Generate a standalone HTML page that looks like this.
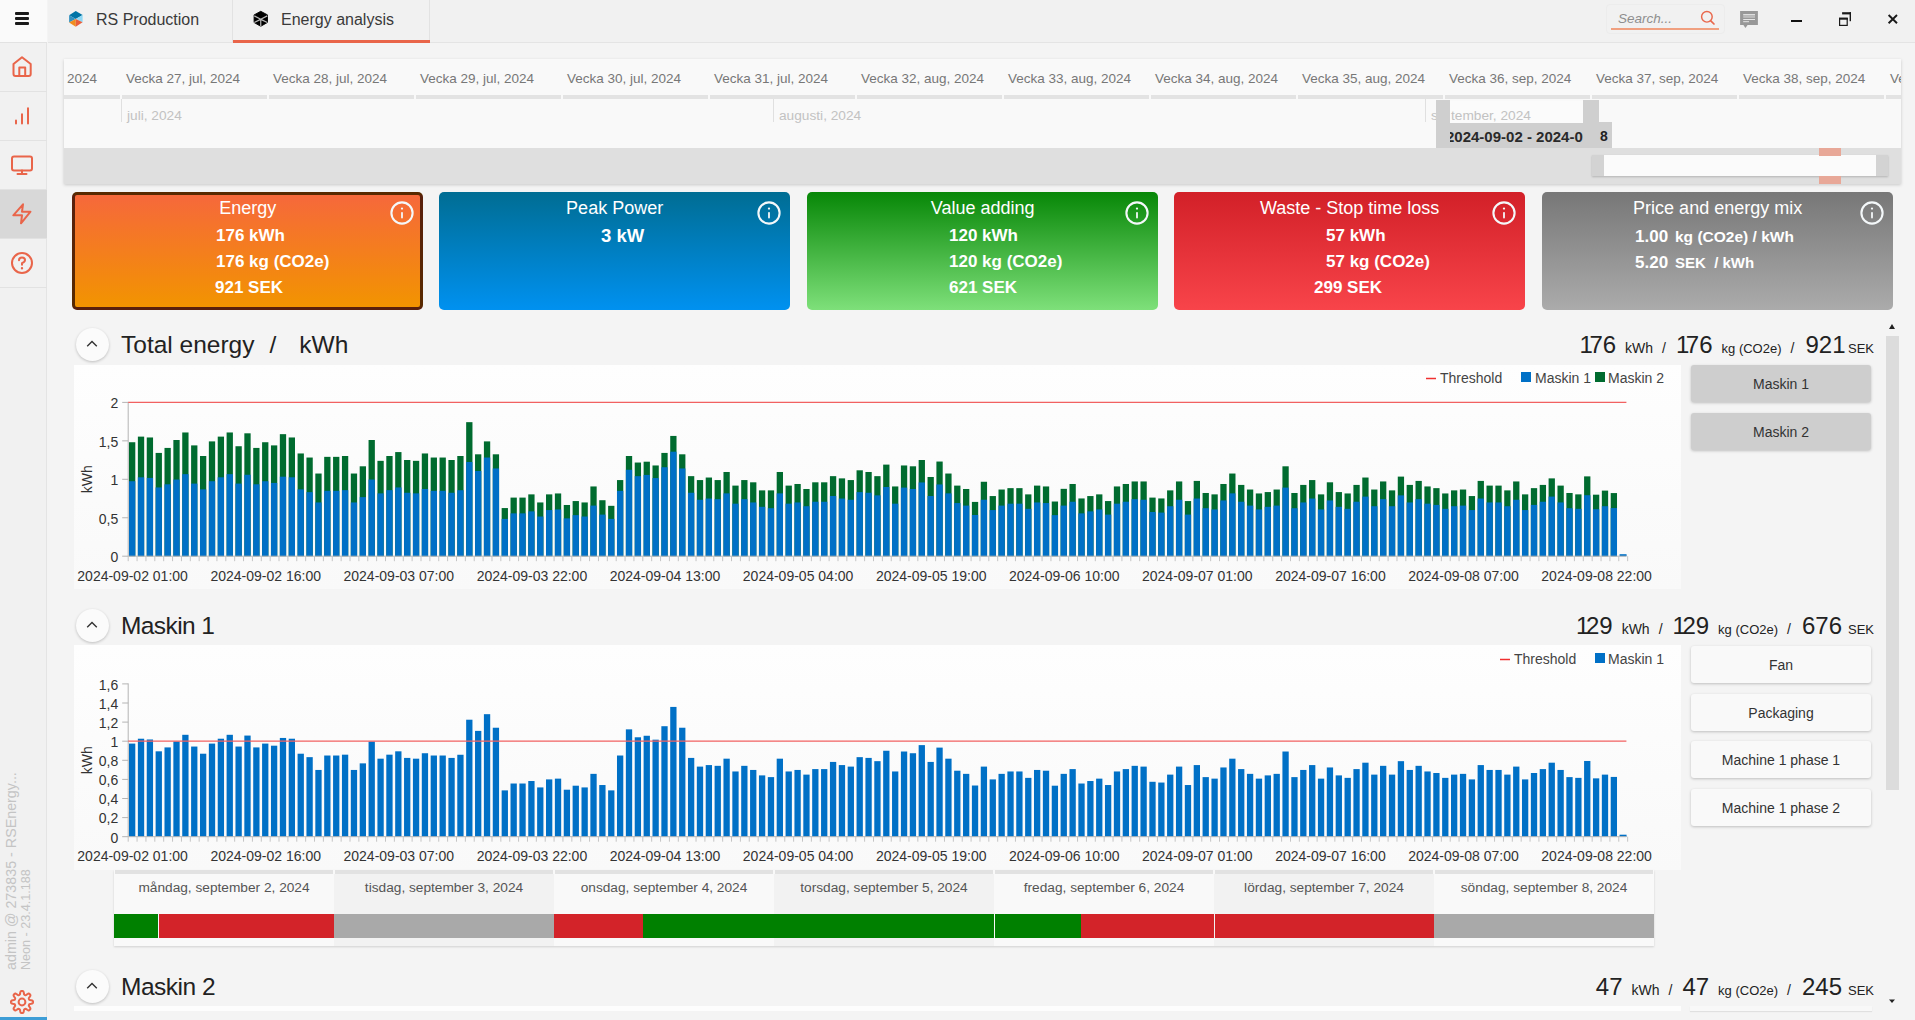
<!DOCTYPE html><html><head><meta charset="utf-8"><style>
*{box-sizing:border-box;margin:0;padding:0}
html,body{width:1915px;height:1020px;overflow:hidden;background:#f4f4f4;font-family:"Liberation Sans", sans-serif;}
.a{position:absolute}
.t{position:absolute;white-space:nowrap;line-height:1}
</style></head><body><div class="a" style="left:0;top:0;width:47px;height:1020px;background:#f1f1f1;border-right:1px solid #e4e4e4"></div><div class="a" style="left:0;top:0;width:47px;height:42px;background:#fafafa"></div><div class="a" style="left:15px;top:12px;width:14px;height:3px;background:#1a1a1a;border-radius:1px"></div><div class="a" style="left:15px;top:17px;width:14px;height:3px;background:#1a1a1a;border-radius:1px"></div><div class="a" style="left:15px;top:22px;width:14px;height:3px;background:#1a1a1a;border-radius:1px"></div><div class="a" style="left:0;top:42px;width:47px;height:1px;background:#e2e2e2"></div><div class="a" style="left:0;top:91px;width:47px;height:1px;background:#e2e2e2"></div><div class="a" style="left:0;top:140px;width:47px;height:1px;background:#e2e2e2"></div><div class="a" style="left:0;top:189px;width:47px;height:1px;background:#e2e2e2"></div><div class="a" style="left:0;top:238px;width:47px;height:1px;background:#e2e2e2"></div><div class="a" style="left:0;top:287px;width:47px;height:1px;background:#e2e2e2"></div><div class="a" style="left:0;top:190px;width:47px;height:48px;background:#d8d8d8"></div><svg class="a" style="left:10px;top:55px" width="24" height="24" viewBox="0 0 24 24"><path d="M3.5 9 L12 2.3 L20.7 9 V19 Q20.7 21 18.7 21 H5.5 Q3.5 21 3.5 19 Z" fill="none" stroke="#e9654a" stroke-width="2" stroke-linecap="round" stroke-linejoin="round"/><path d="M9.3 21 V12.5 H15.2 V21" fill="none" stroke="#e9654a" stroke-width="2" stroke-linecap="round" stroke-linejoin="round"/></svg><svg class="a" style="left:10px;top:103px" width="24" height="24" viewBox="0 0 24 24"><path d="M6 20.6 V17.5 M12 20.6 V11.2 M18 20.6 V5.3" fill="none" stroke="#e9654a" stroke-width="2" stroke-linecap="round" stroke-linejoin="round" stroke-width="2.2"/></svg><svg class="a" style="left:10px;top:153px" width="24" height="24" viewBox="0 0 24 24"><rect x="2" y="3.5" width="20" height="14" rx="2" fill="none" stroke="#e9654a" stroke-width="2" stroke-linecap="round" stroke-linejoin="round"/><path d="M12 17.5 V21 M7.5 21 H16.5" fill="none" stroke="#e9654a" stroke-width="2" stroke-linecap="round" stroke-linejoin="round"/></svg><svg class="a" style="left:10px;top:201px" width="24" height="24" viewBox="0 0 24 24"><path d="M13 3.3 L3.3 14.3 H12 L11 22.3 L20.5 10.7 H12 Z" fill="none" stroke="#e9654a" stroke-width="2" stroke-linecap="round" stroke-linejoin="round"/></svg><svg class="a" style="left:10px;top:251px" width="24" height="24" viewBox="0 0 24 24"><circle cx="12" cy="12" r="10" fill="none" stroke="#e9654a" stroke-width="2" stroke-linecap="round" stroke-linejoin="round"/><path d="M9 9.2 Q9 6.5 12 6.5 Q15 6.5 15 9 Q15 10.8 12 12.2 V13.8" fill="none" stroke="#e9654a" stroke-width="2" stroke-linecap="round" stroke-linejoin="round"/><circle cx="12" cy="17.3" r="0.6" fill="#e9654a" stroke="#e9654a" stroke-width="1.2"/></svg><div class="t" style="left:4px;top:970px;transform-origin:0 0;transform:rotate(-90deg);font-size:14.3px;color:#c4c4c4">admin @ 273835 - RSEnergy...</div><div class="t" style="left:20px;top:970px;transform-origin:0 0;transform:rotate(-90deg);font-size:12.6px;color:#c4c4c4">Neon - 23.4.1.188</div><svg class="a" style="left:10px;top:990px" width="24" height="24" viewBox="0 0 24 24"><path d="M12.00 0.95 L12.43 0.98 L12.86 1.08 L13.26 1.32 L13.60 1.89 L13.81 2.88 L13.95 3.86 L14.13 4.45 L14.36 4.73 L14.62 4.90 L14.89 5.02 L15.17 5.13 L15.47 5.19 L15.84 5.15 L16.37 4.87 L17.17 4.27 L18.02 3.72 L18.66 3.56 L19.12 3.67 L19.49 3.90 L19.81 4.19 L20.10 4.51 L20.33 4.88 L20.44 5.34 L20.28 5.98 L19.73 6.83 L19.13 7.63 L18.85 8.16 L18.81 8.53 L18.87 8.83 L18.98 9.11 L19.10 9.38 L19.27 9.64 L19.55 9.87 L20.14 10.05 L21.12 10.19 L22.11 10.40 L22.68 10.74 L22.92 11.14 L23.02 11.57 L23.05 12.00 L23.02 12.43 L22.92 12.86 L22.68 13.26 L22.11 13.60 L21.12 13.81 L20.14 13.95 L19.55 14.13 L19.27 14.36 L19.10 14.62 L18.98 14.89 L18.87 15.17 L18.81 15.47 L18.85 15.84 L19.13 16.37 L19.73 17.17 L20.28 18.02 L20.44 18.66 L20.33 19.12 L20.10 19.49 L19.81 19.81 L19.49 20.10 L19.12 20.33 L18.66 20.44 L18.02 20.28 L17.17 19.73 L16.37 19.13 L15.84 18.85 L15.47 18.81 L15.17 18.87 L14.89 18.98 L14.62 19.10 L14.36 19.27 L14.13 19.55 L13.95 20.14 L13.81 21.12 L13.60 22.11 L13.26 22.68 L12.86 22.92 L12.43 23.02 L12.00 23.05 L11.57 23.02 L11.14 22.92 L10.74 22.68 L10.40 22.11 L10.19 21.12 L10.05 20.14 L9.87 19.55 L9.64 19.27 L9.38 19.10 L9.11 18.98 L8.83 18.87 L8.53 18.81 L8.16 18.85 L7.63 19.13 L6.83 19.73 L5.98 20.28 L5.34 20.44 L4.88 20.33 L4.51 20.10 L4.19 19.81 L3.90 19.49 L3.67 19.12 L3.56 18.66 L3.72 18.02 L4.27 17.17 L4.87 16.37 L5.15 15.84 L5.19 15.47 L5.13 15.17 L5.02 14.89 L4.90 14.62 L4.73 14.36 L4.45 14.13 L3.86 13.95 L2.88 13.81 L1.89 13.60 L1.32 13.26 L1.08 12.86 L0.98 12.43 L0.95 12.00 L0.98 11.57 L1.08 11.14 L1.32 10.74 L1.89 10.40 L2.88 10.19 L3.86 10.05 L4.45 9.87 L4.73 9.64 L4.90 9.38 L5.02 9.11 L5.13 8.83 L5.19 8.53 L5.15 8.16 L4.87 7.63 L4.27 6.83 L3.72 5.98 L3.56 5.34 L3.67 4.88 L3.90 4.51 L4.19 4.19 L4.51 3.90 L4.88 3.67 L5.34 3.56 L5.98 3.72 L6.83 4.27 L7.63 4.87 L8.16 5.15 L8.53 5.19 L8.83 5.13 L9.11 5.02 L9.38 4.90 L9.64 4.73 L9.87 4.45 L10.05 3.86 L10.19 2.88 L10.40 1.89 L10.74 1.32 L11.14 1.08 L11.57 0.98 L12.00 0.95 Z" fill="none" stroke="#e9654a" stroke-width="2" stroke-linecap="round" stroke-linejoin="round" stroke-width="1.8"/><circle cx="12" cy="12" r="3.4" fill="none" stroke="#e9654a" stroke-width="2" stroke-linecap="round" stroke-linejoin="round" stroke-width="1.8"/></svg><div class="a" style="left:0;top:1017px;width:47px;height:3px;background:#3d9dd6"></div><div class="a" style="left:48px;top:0;width:1867px;height:43px;background:#f1f1f1;border-bottom:1px solid #e4e4e4"></div><svg class="a" style="left:63px;top:6px" width="26" height="26" viewBox="0 0 26 26"><polygon points="12.75,5.1 19.6,8.9 12.75,13 6.1,9.2" fill="#0074a6"/><polygon points="6.1,9.2 12.75,13 6.1,16.6" fill="#3190c0"/><polygon points="19.6,8.9 19.6,16.3 12.75,13" fill="#8fd8f4"/><polygon points="6.1,16.6 12.75,13 12.75,20.7" fill="#f08d1e"/><polygon points="12.75,13 19.6,16.3 12.75,20.7" fill="#e95e3b"/></svg><div class="t" style="left:96px;top:12px;font-size:16px;color:#3a3a3a">RS Production</div><div class="a" style="left:232px;top:0;width:1px;height:42px;background:#e2e2e2"></div><div class="a" style="left:429px;top:0;width:1px;height:42px;background:#e2e2e2"></div><svg class="a" style="left:248px;top:6px" width="26" height="26" viewBox="0 0 26 26"><polygon points="12.75,5.3 19.5,8.9 19.5,16.4 12.75,20.3 6.1,16.5 6.1,8.9" fill="#000" stroke="#000" stroke-width="0.9" stroke-linejoin="round"/><path d="M12.75 13.2 L6.3 9.9 M12.75 13.2 L19.3 9.9 M12.75 13.2 V20.5 M12.1 13.6 L6.3 16.5 M13.4 13.6 L19.3 16.5" stroke="#b9b9b9" stroke-width="1.2" fill="none"/></svg><div class="t" style="left:281px;top:12px;font-size:16px;color:#3a3a3a">Energy analysis</div><div class="a" style="left:233px;top:40px;width:197px;height:3px;background:#e9654a"></div><div class="a" style="left:1606px;top:4px;width:119px;height:30px;border:1px solid #ececec;border-radius:4px"></div><div class="t" style="left:1618px;top:12px;font-size:13.5px;font-style:italic;color:#8e8e8e">Search...</div><div class="a" style="left:1611px;top:28px;width:108px;height:2px;background:#f0a080"></div><svg class="a" style="left:1699px;top:9px" width="18" height="18" viewBox="0 0 18 18"><circle cx="7.9" cy="7.8" r="5.3" fill="none" stroke="#e9684c" stroke-width="1.45"/><path d="M11.8 11.8 L15 15" stroke="#e9684c" stroke-width="1.7" stroke-linecap="round"/></svg><svg class="a" style="left:1739px;top:10px" width="20" height="20" viewBox="0 0 20 20"><path d="M1.1 1 H18.9 V15 H8.6 L6.4 18 L4.4 15 H1.1 Z" fill="#989898"/><rect x="4.2" y="5.2" width="11.8" height="2.7" fill="#bcbcbc"/><path d="M4.2 4.6 H16 M4.2 9.5 H16 M4.2 11.7 H10" stroke="#eeeeee" stroke-width="0.9"/></svg><div class="a" style="left:1791px;top:20px;width:11px;height:2px;background:#111"></div><svg class="a" style="left:1837px;top:10px" width="16" height="17" viewBox="0 0 16 17"><rect x="2.6" y="8.4" width="7.6" height="7" fill="none" stroke="#1a1a1a" stroke-width="1.2"/><rect x="2" y="7.7" width="8.8" height="2" fill="#1a1a1a"/><rect x="5.1" y="2.2" width="8.9" height="2.2" fill="#1a1a1a"/><rect x="12.6" y="2.2" width="1.4" height="9" fill="#1a1a1a"/></svg><svg class="a" style="left:1886px;top:12px" width="13" height="13" viewBox="0 0 13 13"><path d="M2.6 3 L11 11.2 M11 3 L2.6 11.2" stroke="#1a1a1a" stroke-width="1.9"/></svg><div class="a" style="left:64px;top:59px;width:1837px;height:125px;background:#f9f9f9;box-shadow:0 1px 3px rgba(0,0,0,0.18);overflow:hidden"><div class="a" style="left:0;top:89px;width:1837px;height:36px;background:#dfdfdf"></div><div class="a" style="left:0;top:36px;width:56px;height:4px;background:#e3e3e3"></div><div class="t" style="left:3px;top:13px;font-size:13.5px;color:#777">2024</div><div class="a" style="left:58px;top:36px;width:145px;height:4px;background:#e3e3e3"></div><div class="t" style="left:62px;top:13px;font-size:13.5px;color:#777">Vecka 27, jul, 2024</div><div class="a" style="left:205px;top:36px;width:145px;height:4px;background:#e3e3e3"></div><div class="t" style="left:209px;top:13px;font-size:13.5px;color:#777">Vecka 28, jul, 2024</div><div class="a" style="left:352px;top:36px;width:145px;height:4px;background:#e3e3e3"></div><div class="t" style="left:356px;top:13px;font-size:13.5px;color:#777">Vecka 29, jul, 2024</div><div class="a" style="left:499px;top:36px;width:145px;height:4px;background:#e3e3e3"></div><div class="t" style="left:503px;top:13px;font-size:13.5px;color:#777">Vecka 30, jul, 2024</div><div class="a" style="left:646px;top:36px;width:145px;height:4px;background:#e3e3e3"></div><div class="t" style="left:650px;top:13px;font-size:13.5px;color:#777">Vecka 31, jul, 2024</div><div class="a" style="left:793px;top:36px;width:145px;height:4px;background:#e3e3e3"></div><div class="t" style="left:797px;top:13px;font-size:13.5px;color:#777">Vecka 32, aug, 2024</div><div class="a" style="left:940px;top:36px;width:145px;height:4px;background:#e3e3e3"></div><div class="t" style="left:944px;top:13px;font-size:13.5px;color:#777">Vecka 33, aug, 2024</div><div class="a" style="left:1087px;top:36px;width:145px;height:4px;background:#e3e3e3"></div><div class="t" style="left:1091px;top:13px;font-size:13.5px;color:#777">Vecka 34, aug, 2024</div><div class="a" style="left:1234px;top:36px;width:145px;height:4px;background:#e3e3e3"></div><div class="t" style="left:1238px;top:13px;font-size:13.5px;color:#777">Vecka 35, aug, 2024</div><div class="a" style="left:1381px;top:36px;width:145px;height:4px;background:#e3e3e3"></div><div class="t" style="left:1385px;top:13px;font-size:13.5px;color:#777">Vecka 36, sep, 2024</div><div class="a" style="left:1528px;top:36px;width:145px;height:4px;background:#e3e3e3"></div><div class="t" style="left:1532px;top:13px;font-size:13.5px;color:#777">Vecka 37, sep, 2024</div><div class="a" style="left:1675px;top:36px;width:145px;height:4px;background:#e3e3e3"></div><div class="t" style="left:1679px;top:13px;font-size:13.5px;color:#777">Vecka 38, sep, 2024</div><div class="a" style="left:1822px;top:36px;width:145px;height:4px;background:#e3e3e3"></div><div class="t" style="left:1826px;top:13px;font-size:13.5px;color:#777">Vecka 39, sep, 2024</div><div class="a" style="left:57px;top:40px;width:1px;height:23px;background:#e0e0e0"></div><div class="t" style="left:63px;top:50px;font-size:13.7px;color:#c2c2c2">juli, 2024</div><div class="a" style="left:709px;top:40px;width:1px;height:23px;background:#e0e0e0"></div><div class="t" style="left:715px;top:50px;font-size:13.7px;color:#c2c2c2">augusti, 2024</div><div class="a" style="left:1361px;top:40px;width:1px;height:23px;background:#e0e0e0"></div><div class="t" style="left:1367px;top:50px;font-size:13.7px;color:#c2c2c2">september, 2024</div><div class="a" style="left:1372px;top:41px;width:14px;height:48px;background:#cfcfcf"></div><div class="a" style="left:1519px;top:41px;width:16px;height:48px;background:#cfcfcf"></div><div class="a" style="left:1372px;top:63px;width:176px;height:26px;background:#cfcfcf"></div><div class="a" style="left:1386px;top:42px;width:133px;height:22px;background:#fbfbfb;overflow:hidden"><div class="t" style="left:1px;top:8px;font-size:13.7px;color:#c2c2c2">tember, 2024</div></div><div class="a" style="left:1386px;top:63px;width:133px;height:26px;overflow:hidden"><div class="t" style="left:-4px;top:7px;font-size:15px;font-weight:bold;color:#2a2a2a">2024-09-02 - 2024-09-08</div></div><div class="t" style="left:1536px;top:70px;font-size:14px;font-weight:bold;color:#222">8</div><div class="a" style="left:1528px;top:96px;width:296px;height:21px;background:#d3d3d3;box-shadow:0 1px 2px rgba(0,0,0,0.2)"></div><div class="a" style="left:1540px;top:96px;width:272px;height:21px;background:#fbfbfb"></div><div class="a" style="left:1755px;top:89px;width:22px;height:8px;background:#e8a898"></div><div class="a" style="left:1755px;top:117px;width:22px;height:8px;background:#e8a898"></div></div><div class="a" style="left:72px;top:192px;width:351.3px;height:118px;background:linear-gradient(#f6683b,#f29400);border-radius:5px;border:3px solid rgba(45,12,0,0.78);"></div><div class="t" style="left:72px;top:199px;width:351.3px;text-align:center;font-size:18px;color:#fff">Energy</div><svg class="a" style="left:389.3px;top:200px" width="26" height="26" viewBox="0 0 26 26"><circle cx="13" cy="13" r="10.6" fill="none" stroke="#f4f8fa" stroke-width="2.1"/><circle cx="13" cy="8.6" r="1.15" fill="#f4f8fa"/><rect x="12.1" y="11.9" width="1.8" height="6.6" rx="0.9" fill="#f4f8fa"/></svg><div class="a" style="left:439px;top:192px;width:351.3px;height:118px;background:linear-gradient(#006d93,#0091f0);border-radius:5px;"></div><div class="t" style="left:439px;top:199px;width:351.3px;text-align:center;font-size:18px;color:#fff">Peak Power</div><svg class="a" style="left:756.3px;top:200px" width="26" height="26" viewBox="0 0 26 26"><circle cx="13" cy="13" r="10.6" fill="none" stroke="#f4f8fa" stroke-width="2.1"/><circle cx="13" cy="8.6" r="1.15" fill="#f4f8fa"/><rect x="12.1" y="11.9" width="1.8" height="6.6" rx="0.9" fill="#f4f8fa"/></svg><div class="a" style="left:807px;top:192px;width:351.3px;height:118px;background:linear-gradient(#078707,#7ee07a);border-radius:5px;"></div><div class="t" style="left:807px;top:199px;width:351.3px;text-align:center;font-size:18px;color:#fff">Value adding</div><svg class="a" style="left:1124.3px;top:200px" width="26" height="26" viewBox="0 0 26 26"><circle cx="13" cy="13" r="10.6" fill="none" stroke="#f4f8fa" stroke-width="2.1"/><circle cx="13" cy="8.6" r="1.15" fill="#f4f8fa"/><rect x="12.1" y="11.9" width="1.8" height="6.6" rx="0.9" fill="#f4f8fa"/></svg><div class="a" style="left:1174px;top:192px;width:351.3px;height:118px;background:linear-gradient(#d22028,#f8444a);border-radius:5px;"></div><div class="t" style="left:1174px;top:199px;width:351.3px;text-align:center;font-size:18px;color:#fff">Waste - Stop time loss</div><svg class="a" style="left:1491.3px;top:200px" width="26" height="26" viewBox="0 0 26 26"><circle cx="13" cy="13" r="10.6" fill="none" stroke="#f4f8fa" stroke-width="2.1"/><circle cx="13" cy="8.6" r="1.15" fill="#f4f8fa"/><rect x="12.1" y="11.9" width="1.8" height="6.6" rx="0.9" fill="#f4f8fa"/></svg><div class="a" style="left:1542px;top:192px;width:351.3px;height:118px;background:linear-gradient(#777777,#ababab);border-radius:5px;"></div><div class="t" style="left:1542px;top:199px;width:351.3px;text-align:center;font-size:18px;color:#fff">Price and energy mix</div><svg class="a" style="left:1859.3px;top:200px" width="26" height="26" viewBox="0 0 26 26"><circle cx="13" cy="13" r="10.6" fill="none" stroke="#f4f8fa" stroke-width="2.1"/><circle cx="13" cy="8.6" r="1.15" fill="#f4f8fa"/><rect x="12.1" y="11.9" width="1.8" height="6.6" rx="0.9" fill="#f4f8fa"/></svg><div class="t" style="left:216px;top:227px;font-size:17px;font-weight:bold;color:#fff">176 kWh</div><div class="t" style="left:216px;top:253px;font-size:17px;font-weight:bold;color:#fff">176 kg (CO2e)</div><div class="t" style="left:215px;top:279px;font-size:17px;font-weight:bold;color:#fff">921 SEK</div><div class="t" style="left:601px;top:226.5px;font-size:18.5px;font-weight:bold;color:#fff">3 kW</div><div class="t" style="left:949px;top:227px;font-size:17px;font-weight:bold;color:#fff">120 kWh</div><div class="t" style="left:949px;top:253px;font-size:17px;font-weight:bold;color:#fff">120 kg (CO2e)</div><div class="t" style="left:949px;top:279px;font-size:17px;font-weight:bold;color:#fff">621 SEK</div><div class="t" style="left:1326px;top:227px;font-size:17px;font-weight:bold;color:#fff">57 kWh</div><div class="t" style="left:1326px;top:253px;font-size:17px;font-weight:bold;color:#fff">57 kg (CO2e)</div><div class="t" style="left:1314px;top:279px;font-size:17px;font-weight:bold;color:#fff">299 SEK</div><div class="t" style="left:1635px;top:228px;font-size:17px;font-weight:bold;color:#fff">1.00</div><div class="t" style="left:1675px;top:229px;font-size:15.5px;font-weight:bold;color:#fff">kg (CO2e) / kWh</div><div class="t" style="left:1635px;top:254px;font-size:17px;font-weight:bold;color:#fff">5.20</div><div class="t" style="left:1675px;top:255px;font-size:15px;font-weight:bold;color:#fff">SEK&nbsp; / kWh</div><div class="a" style="left:76px;top:328px;width:33px;height:33px;border-radius:50%;background:#fbfbfb;box-shadow:0 1px 3px rgba(0,0,0,0.22)"></div><svg class="a" style="left:86px;top:340px" width="12" height="8" viewBox="0 0 12 8"><path d="M1.2 6.3 L6 1.6 L10.8 6.3" fill="none" stroke="#333" stroke-width="1.4"/></svg><div class="t" style="left:121px;top:333.4px;font-size:24.5px;color:#222">Total energy<span style="display:inline-block;width:15px"></span>/<span style="display:inline-block;width:23px"></span>kWh</div><div class="t" style="right:41px;top:332.7px;display:flex;align-items:baseline;color:#222"><span style="font-size:24px"><span style="letter-spacing:-3.5px">1</span>76</span><span style="display:inline-block;width:9px"></span><span style="font-size:14px">kWh</span><span style="display:inline-block;width:9px"></span><span style="font-size:14px">/</span><span style="display:inline-block;width:10px"></span><span style="font-size:24px"><span style="letter-spacing:-3.5px">1</span>76</span><span style="display:inline-block;width:9px"></span><span style="font-size:13px">kg (CO2e)</span><span style="display:inline-block;width:9px"></span><span style="font-size:14px">/</span><span style="display:inline-block;width:11px"></span><span style="font-size:24px">92<span style="letter-spacing:-3.5px">1</span></span><span style="display:inline-block;width:6px"></span><span style="font-size:13px">SEK</span></div><div class="a" style="left:76px;top:609px;width:33px;height:33px;border-radius:50%;background:#fbfbfb;box-shadow:0 1px 3px rgba(0,0,0,0.22)"></div><svg class="a" style="left:86px;top:621px" width="12" height="8" viewBox="0 0 12 8"><path d="M1.2 6.3 L6 1.6 L10.8 6.3" fill="none" stroke="#333" stroke-width="1.4"/></svg><div class="t" style="left:121px;top:614.4px;font-size:24.5px;color:#222"><span style="letter-spacing:-0.6px">Maskin 1</span></div><div class="t" style="right:41px;top:613.7px;display:flex;align-items:baseline;color:#222"><span style="font-size:24px"><span style="letter-spacing:-3.5px">1</span>29</span><span style="display:inline-block;width:9px"></span><span style="font-size:14px">kWh</span><span style="display:inline-block;width:9px"></span><span style="font-size:14px">/</span><span style="display:inline-block;width:10px"></span><span style="font-size:24px"><span style="letter-spacing:-3.5px">1</span>29</span><span style="display:inline-block;width:9px"></span><span style="font-size:13px">kg (CO2e)</span><span style="display:inline-block;width:9px"></span><span style="font-size:14px">/</span><span style="display:inline-block;width:11px"></span><span style="font-size:24px">676</span><span style="display:inline-block;width:6px"></span><span style="font-size:13px">SEK</span></div><div class="a" style="left:76px;top:970px;width:33px;height:33px;border-radius:50%;background:#fbfbfb;box-shadow:0 1px 3px rgba(0,0,0,0.22)"></div><svg class="a" style="left:86px;top:982px" width="12" height="8" viewBox="0 0 12 8"><path d="M1.2 6.3 L6 1.6 L10.8 6.3" fill="none" stroke="#333" stroke-width="1.4"/></svg><div class="t" style="left:121px;top:975.4px;font-size:24.5px;color:#222"><span style="letter-spacing:-0.5px">Maskin 2</span></div><div class="t" style="right:41px;top:974.7px;display:flex;align-items:baseline;color:#222"><span style="font-size:24px">47</span><span style="display:inline-block;width:9px"></span><span style="font-size:14px">kWh</span><span style="display:inline-block;width:9px"></span><span style="font-size:14px">/</span><span style="display:inline-block;width:10px"></span><span style="font-size:24px">47</span><span style="display:inline-block;width:9px"></span><span style="font-size:13px">kg (CO2e)</span><span style="display:inline-block;width:9px"></span><span style="font-size:14px">/</span><span style="display:inline-block;width:11px"></span><span style="font-size:24px">245</span><span style="display:inline-block;width:6px"></span><span style="font-size:13px">SEK</span></div><div class="a" style="left:74px;top:365px;width:1607px;height:224px;background:linear-gradient(#fefefe,#f9f9f9)"></div><div class="a" style="left:74px;top:645px;width:1607px;height:225px;background:linear-gradient(#fefefe,#f9f9f9)"></div><div class="a" style="left:74px;top:1006px;width:1607px;height:5px;background:#fdfdfd"></div><div class="a" style="left:1690px;top:1006px;width:182px;height:5px;background:#f8f8f8;box-shadow:0 1px 1px rgba(0,0,0,0.08)"></div><div class="a" style="left:1691px;top:365px;width:180px;height:37px;background:#cecece;border-radius:3px;box-shadow:0 1px 3px rgba(0,0,0,0.22)"></div><div class="t" style="left:1691px;top:377px;width:180px;text-align:center;font-size:14px;color:#333">Maskin 1</div><div class="a" style="left:1691px;top:413px;width:180px;height:37px;background:#cecece;border-radius:3px;box-shadow:0 1px 3px rgba(0,0,0,0.22)"></div><div class="t" style="left:1691px;top:425px;width:180px;text-align:center;font-size:14px;color:#333">Maskin 2</div><div class="a" style="left:1691px;top:646px;width:180px;height:37px;background:#f9f9f9;border-radius:3px;box-shadow:0 1px 3px rgba(0,0,0,0.22)"></div><div class="t" style="left:1691px;top:658px;width:180px;text-align:center;font-size:14px;color:#333">Fan</div><div class="a" style="left:1691px;top:694px;width:180px;height:37px;background:#f9f9f9;border-radius:3px;box-shadow:0 1px 3px rgba(0,0,0,0.22)"></div><div class="t" style="left:1691px;top:706px;width:180px;text-align:center;font-size:14px;color:#333">Packaging</div><div class="a" style="left:1691px;top:741px;width:180px;height:37px;background:#f9f9f9;border-radius:3px;box-shadow:0 1px 3px rgba(0,0,0,0.22)"></div><div class="t" style="left:1691px;top:753px;width:180px;text-align:center;font-size:14px;color:#333">Machine 1 phase 1</div><div class="a" style="left:1691px;top:789px;width:180px;height:37px;background:#f9f9f9;border-radius:3px;box-shadow:0 1px 3px rgba(0,0,0,0.22)"></div><div class="t" style="left:1691px;top:801px;width:180px;text-align:center;font-size:14px;color:#333">Machine 1 phase 2</div><div class="a" style="left:1886px;top:336px;width:13px;height:454px;background:#dcdcdc"></div><svg class="a" style="left:1887px;top:322px" width="10" height="8" viewBox="0 0 10 8"><path d="M2 7 L5 2 L8 7 Z" fill="#222"/></svg><svg class="a" style="left:1887px;top:997px" width="10" height="8" viewBox="0 0 10 8"><path d="M2 2.5 L5 6 L8 2.5 Z" fill="#222"/></svg><svg class="a" style="left:0;top:0" width="1915" height="1020" viewBox="0 0 1915 1020"><rect x="129.00" y="442.23" width="6.3" height="113.97" fill="#006b2f"/><rect x="129.00" y="481.22" width="6.3" height="74.98" fill="#0070c6"/><rect x="137.87" y="436.62" width="6.3" height="119.58" fill="#006b2f"/><rect x="137.87" y="477.30" width="6.3" height="78.90" fill="#0070c6"/><rect x="146.75" y="437.47" width="6.3" height="118.73" fill="#006b2f"/><rect x="146.75" y="477.92" width="6.3" height="78.28" fill="#0070c6"/><rect x="155.62" y="452.92" width="6.3" height="103.28" fill="#006b2f"/><rect x="155.62" y="487.45" width="6.3" height="68.75" fill="#0070c6"/><rect x="164.49" y="447.92" width="6.3" height="108.28" fill="#006b2f"/><rect x="164.49" y="484.30" width="6.3" height="71.90" fill="#0070c6"/><rect x="173.36" y="440.00" width="6.3" height="116.20" fill="#006b2f"/><rect x="173.36" y="479.53" width="6.3" height="76.67" fill="#0070c6"/><rect x="182.24" y="432.47" width="6.3" height="123.73" fill="#006b2f"/><rect x="182.24" y="474.15" width="6.3" height="82.05" fill="#0070c6"/><rect x="191.11" y="445.39" width="6.3" height="110.81" fill="#006b2f"/><rect x="191.11" y="483.61" width="6.3" height="72.59" fill="#0070c6"/><rect x="199.98" y="456.00" width="6.3" height="100.20" fill="#006b2f"/><rect x="199.98" y="489.37" width="6.3" height="66.83" fill="#0070c6"/><rect x="208.85" y="441.39" width="6.3" height="114.81" fill="#006b2f"/><rect x="208.85" y="481.22" width="6.3" height="74.98" fill="#0070c6"/><rect x="217.73" y="436.62" width="6.3" height="119.58" fill="#006b2f"/><rect x="217.73" y="477.30" width="6.3" height="78.90" fill="#0070c6"/><rect x="226.60" y="432.47" width="6.3" height="123.73" fill="#006b2f"/><rect x="226.60" y="474.15" width="6.3" height="82.05" fill="#0070c6"/><rect x="235.47" y="446.23" width="6.3" height="109.97" fill="#006b2f"/><rect x="235.47" y="483.61" width="6.3" height="72.59" fill="#0070c6"/><rect x="244.34" y="433.31" width="6.3" height="122.89" fill="#006b2f"/><rect x="244.34" y="474.76" width="6.3" height="81.44" fill="#0070c6"/><rect x="253.22" y="447.92" width="6.3" height="108.28" fill="#006b2f"/><rect x="253.22" y="484.30" width="6.3" height="71.90" fill="#0070c6"/><rect x="262.09" y="442.23" width="6.3" height="113.97" fill="#006b2f"/><rect x="262.09" y="481.22" width="6.3" height="74.98" fill="#0070c6"/><rect x="270.96" y="445.39" width="6.3" height="110.81" fill="#006b2f"/><rect x="270.96" y="482.91" width="6.3" height="73.29" fill="#0070c6"/><rect x="279.83" y="434.16" width="6.3" height="122.04" fill="#006b2f"/><rect x="279.83" y="476.69" width="6.3" height="79.51" fill="#0070c6"/><rect x="288.70" y="437.47" width="6.3" height="118.73" fill="#006b2f"/><rect x="288.70" y="477.30" width="6.3" height="78.90" fill="#0070c6"/><rect x="297.58" y="453.46" width="6.3" height="102.74" fill="#006b2f"/><rect x="297.58" y="489.37" width="6.3" height="66.83" fill="#0070c6"/><rect x="306.45" y="457.54" width="6.3" height="98.66" fill="#006b2f"/><rect x="306.45" y="492.14" width="6.3" height="64.06" fill="#0070c6"/><rect x="315.32" y="473.53" width="6.3" height="82.67" fill="#006b2f"/><rect x="315.32" y="502.45" width="6.3" height="53.75" fill="#0070c6"/><rect x="324.19" y="456.85" width="6.3" height="99.35" fill="#006b2f"/><rect x="324.19" y="490.84" width="6.3" height="65.37" fill="#0070c6"/><rect x="333.07" y="456.85" width="6.3" height="99.35" fill="#006b2f"/><rect x="333.07" y="490.84" width="6.3" height="65.37" fill="#0070c6"/><rect x="341.94" y="456.00" width="6.3" height="100.20" fill="#006b2f"/><rect x="341.94" y="490.14" width="6.3" height="66.06" fill="#0070c6"/><rect x="350.81" y="473.53" width="6.3" height="82.67" fill="#006b2f"/><rect x="350.81" y="502.45" width="6.3" height="53.75" fill="#0070c6"/><rect x="359.69" y="466.30" width="6.3" height="89.90" fill="#006b2f"/><rect x="359.69" y="497.14" width="6.3" height="59.06" fill="#0070c6"/><rect x="368.56" y="440.00" width="6.3" height="116.20" fill="#006b2f"/><rect x="368.56" y="479.53" width="6.3" height="76.67" fill="#0070c6"/><rect x="377.43" y="460.84" width="6.3" height="95.36" fill="#006b2f"/><rect x="377.43" y="493.37" width="6.3" height="62.83" fill="#0070c6"/><rect x="386.30" y="456.00" width="6.3" height="100.20" fill="#006b2f"/><rect x="386.30" y="490.14" width="6.3" height="66.06" fill="#0070c6"/><rect x="395.18" y="452.08" width="6.3" height="104.12" fill="#006b2f"/><rect x="395.18" y="487.45" width="6.3" height="68.75" fill="#0070c6"/><rect x="404.05" y="460.00" width="6.3" height="96.20" fill="#006b2f"/><rect x="404.05" y="492.76" width="6.3" height="63.44" fill="#0070c6"/><rect x="412.92" y="460.84" width="6.3" height="95.36" fill="#006b2f"/><rect x="412.92" y="493.37" width="6.3" height="62.83" fill="#0070c6"/><rect x="421.79" y="453.46" width="6.3" height="102.74" fill="#006b2f"/><rect x="421.79" y="488.99" width="6.3" height="67.21" fill="#0070c6"/><rect x="430.67" y="457.54" width="6.3" height="98.66" fill="#006b2f"/><rect x="430.67" y="490.84" width="6.3" height="65.37" fill="#0070c6"/><rect x="439.54" y="457.54" width="6.3" height="98.66" fill="#006b2f"/><rect x="439.54" y="490.84" width="6.3" height="65.37" fill="#0070c6"/><rect x="448.41" y="460.00" width="6.3" height="96.20" fill="#006b2f"/><rect x="448.41" y="492.76" width="6.3" height="63.44" fill="#0070c6"/><rect x="457.28" y="456.00" width="6.3" height="100.20" fill="#006b2f"/><rect x="457.28" y="490.22" width="6.3" height="65.98" fill="#0070c6"/><rect x="466.16" y="422.16" width="6.3" height="134.04" fill="#006b2f"/><rect x="466.16" y="462.00" width="6.3" height="94.20" fill="#0070c6"/><rect x="475.03" y="454.31" width="6.3" height="101.89" fill="#006b2f"/><rect x="475.03" y="470.99" width="6.3" height="85.21" fill="#0070c6"/><rect x="483.90" y="441.39" width="6.3" height="114.81" fill="#006b2f"/><rect x="483.90" y="457.54" width="6.3" height="98.66" fill="#0070c6"/><rect x="492.77" y="454.31" width="6.3" height="101.89" fill="#006b2f"/><rect x="492.77" y="468.46" width="6.3" height="87.74" fill="#0070c6"/><rect x="501.65" y="508.06" width="6.3" height="48.14" fill="#006b2f"/><rect x="501.65" y="518.90" width="6.3" height="37.30" fill="#0070c6"/><rect x="510.52" y="497.60" width="6.3" height="58.60" fill="#006b2f"/><rect x="510.52" y="513.37" width="6.3" height="42.83" fill="#0070c6"/><rect x="519.39" y="497.60" width="6.3" height="58.60" fill="#006b2f"/><rect x="519.39" y="513.37" width="6.3" height="42.83" fill="#0070c6"/><rect x="528.26" y="494.37" width="6.3" height="61.83" fill="#006b2f"/><rect x="528.26" y="511.37" width="6.3" height="44.83" fill="#0070c6"/><rect x="537.13" y="502.45" width="6.3" height="53.75" fill="#006b2f"/><rect x="537.13" y="516.52" width="6.3" height="39.68" fill="#0070c6"/><rect x="546.01" y="494.37" width="6.3" height="61.83" fill="#006b2f"/><rect x="546.01" y="510.06" width="6.3" height="46.14" fill="#0070c6"/><rect x="554.88" y="493.45" width="6.3" height="62.75" fill="#006b2f"/><rect x="554.88" y="509.44" width="6.3" height="46.76" fill="#0070c6"/><rect x="563.75" y="504.98" width="6.3" height="51.22" fill="#006b2f"/><rect x="563.75" y="518.37" width="6.3" height="37.83" fill="#0070c6"/><rect x="572.62" y="501.06" width="6.3" height="55.14" fill="#006b2f"/><rect x="572.62" y="515.14" width="6.3" height="41.06" fill="#0070c6"/><rect x="581.50" y="502.45" width="6.3" height="53.75" fill="#006b2f"/><rect x="581.50" y="516.52" width="6.3" height="39.68" fill="#0070c6"/><rect x="590.37" y="486.45" width="6.3" height="69.75" fill="#006b2f"/><rect x="590.37" y="505.60" width="6.3" height="50.60" fill="#0070c6"/><rect x="599.24" y="500.22" width="6.3" height="55.98" fill="#006b2f"/><rect x="599.24" y="514.60" width="6.3" height="41.60" fill="#0070c6"/><rect x="608.12" y="505.83" width="6.3" height="50.37" fill="#006b2f"/><rect x="608.12" y="518.90" width="6.3" height="37.30" fill="#0070c6"/><rect x="616.99" y="480.07" width="6.3" height="76.13" fill="#006b2f"/><rect x="616.99" y="490.84" width="6.3" height="65.37" fill="#0070c6"/><rect x="625.86" y="456.00" width="6.3" height="100.20" fill="#006b2f"/><rect x="625.86" y="469.76" width="6.3" height="86.44" fill="#0070c6"/><rect x="634.73" y="462.54" width="6.3" height="93.66" fill="#006b2f"/><rect x="634.73" y="476.15" width="6.3" height="80.05" fill="#0070c6"/><rect x="643.61" y="461.69" width="6.3" height="94.51" fill="#006b2f"/><rect x="643.61" y="474.92" width="6.3" height="81.28" fill="#0070c6"/><rect x="652.48" y="465.46" width="6.3" height="90.74" fill="#006b2f"/><rect x="652.48" y="478.07" width="6.3" height="78.13" fill="#0070c6"/><rect x="661.35" y="452.92" width="6.3" height="103.28" fill="#006b2f"/><rect x="661.35" y="467.23" width="6.3" height="88.97" fill="#0070c6"/><rect x="670.22" y="435.93" width="6.3" height="120.27" fill="#006b2f"/><rect x="670.22" y="451.69" width="6.3" height="104.51" fill="#0070c6"/><rect x="679.10" y="454.31" width="6.3" height="101.89" fill="#006b2f"/><rect x="679.10" y="468.46" width="6.3" height="87.74" fill="#0070c6"/><rect x="687.97" y="476.15" width="6.3" height="80.05" fill="#006b2f"/><rect x="687.97" y="492.76" width="6.3" height="63.44" fill="#0070c6"/><rect x="696.84" y="480.07" width="6.3" height="76.13" fill="#006b2f"/><rect x="696.84" y="499.76" width="6.3" height="56.44" fill="#0070c6"/><rect x="705.71" y="477.53" width="6.3" height="78.67" fill="#006b2f"/><rect x="705.71" y="498.53" width="6.3" height="57.68" fill="#0070c6"/><rect x="714.59" y="480.07" width="6.3" height="76.13" fill="#006b2f"/><rect x="714.59" y="499.14" width="6.3" height="57.06" fill="#0070c6"/><rect x="723.46" y="471.99" width="6.3" height="84.21" fill="#006b2f"/><rect x="723.46" y="493.37" width="6.3" height="62.83" fill="#0070c6"/><rect x="732.33" y="485.61" width="6.3" height="70.59" fill="#006b2f"/><rect x="732.33" y="503.68" width="6.3" height="52.52" fill="#0070c6"/><rect x="741.20" y="480.07" width="6.3" height="76.13" fill="#006b2f"/><rect x="741.20" y="499.14" width="6.3" height="57.06" fill="#0070c6"/><rect x="750.08" y="482.30" width="6.3" height="73.90" fill="#006b2f"/><rect x="750.08" y="502.45" width="6.3" height="53.75" fill="#0070c6"/><rect x="758.95" y="490.37" width="6.3" height="65.83" fill="#006b2f"/><rect x="758.95" y="506.83" width="6.3" height="49.37" fill="#0070c6"/><rect x="767.82" y="490.37" width="6.3" height="65.83" fill="#006b2f"/><rect x="767.82" y="508.21" width="6.3" height="47.99" fill="#0070c6"/><rect x="776.69" y="471.99" width="6.3" height="84.21" fill="#006b2f"/><rect x="776.69" y="493.37" width="6.3" height="62.83" fill="#0070c6"/><rect x="785.57" y="485.61" width="6.3" height="70.59" fill="#006b2f"/><rect x="785.57" y="503.68" width="6.3" height="52.52" fill="#0070c6"/><rect x="794.44" y="483.99" width="6.3" height="72.21" fill="#006b2f"/><rect x="794.44" y="502.45" width="6.3" height="53.75" fill="#0070c6"/><rect x="803.31" y="488.99" width="6.3" height="67.21" fill="#006b2f"/><rect x="803.31" y="506.22" width="6.3" height="49.99" fill="#0070c6"/><rect x="812.18" y="482.30" width="6.3" height="73.90" fill="#006b2f"/><rect x="812.18" y="501.75" width="6.3" height="54.45" fill="#0070c6"/><rect x="821.06" y="482.30" width="6.3" height="73.90" fill="#006b2f"/><rect x="821.06" y="501.75" width="6.3" height="54.45" fill="#0070c6"/><rect x="829.93" y="476.15" width="6.3" height="80.05" fill="#006b2f"/><rect x="829.93" y="495.99" width="6.3" height="60.21" fill="#0070c6"/><rect x="838.80" y="478.38" width="6.3" height="77.82" fill="#006b2f"/><rect x="838.80" y="498.53" width="6.3" height="57.68" fill="#0070c6"/><rect x="847.67" y="480.07" width="6.3" height="76.13" fill="#006b2f"/><rect x="847.67" y="499.76" width="6.3" height="56.44" fill="#0070c6"/><rect x="856.55" y="470.30" width="6.3" height="85.90" fill="#006b2f"/><rect x="856.55" y="492.14" width="6.3" height="64.06" fill="#0070c6"/><rect x="865.42" y="471.99" width="6.3" height="84.21" fill="#006b2f"/><rect x="865.42" y="492.76" width="6.3" height="63.44" fill="#0070c6"/><rect x="874.29" y="476.15" width="6.3" height="80.05" fill="#006b2f"/><rect x="874.29" y="495.37" width="6.3" height="60.83" fill="#0070c6"/><rect x="883.16" y="464.61" width="6.3" height="91.59" fill="#006b2f"/><rect x="883.16" y="486.99" width="6.3" height="69.21" fill="#0070c6"/><rect x="892.04" y="486.45" width="6.3" height="69.75" fill="#006b2f"/><rect x="892.04" y="503.68" width="6.3" height="52.52" fill="#0070c6"/><rect x="900.91" y="465.46" width="6.3" height="90.74" fill="#006b2f"/><rect x="900.91" y="487.61" width="6.3" height="68.59" fill="#0070c6"/><rect x="909.78" y="466.30" width="6.3" height="89.90" fill="#006b2f"/><rect x="909.78" y="488.99" width="6.3" height="67.21" fill="#0070c6"/><rect x="918.65" y="460.00" width="6.3" height="96.20" fill="#006b2f"/><rect x="918.65" y="482.45" width="6.3" height="73.75" fill="#0070c6"/><rect x="927.53" y="476.99" width="6.3" height="79.21" fill="#006b2f"/><rect x="927.53" y="495.99" width="6.3" height="60.21" fill="#0070c6"/><rect x="936.40" y="461.54" width="6.3" height="94.66" fill="#006b2f"/><rect x="936.40" y="484.45" width="6.3" height="71.75" fill="#0070c6"/><rect x="945.27" y="473.53" width="6.3" height="82.67" fill="#006b2f"/><rect x="945.27" y="493.37" width="6.3" height="62.83" fill="#0070c6"/><rect x="954.14" y="485.61" width="6.3" height="70.59" fill="#006b2f"/><rect x="954.14" y="503.06" width="6.3" height="53.14" fill="#0070c6"/><rect x="963.02" y="488.99" width="6.3" height="67.21" fill="#006b2f"/><rect x="963.02" y="505.60" width="6.3" height="50.60" fill="#0070c6"/><rect x="971.89" y="501.91" width="6.3" height="54.29" fill="#006b2f"/><rect x="971.89" y="514.98" width="6.3" height="41.22" fill="#0070c6"/><rect x="980.76" y="481.76" width="6.3" height="74.44" fill="#006b2f"/><rect x="980.76" y="499.76" width="6.3" height="56.44" fill="#0070c6"/><rect x="989.63" y="496.06" width="6.3" height="60.14" fill="#006b2f"/><rect x="989.63" y="510.06" width="6.3" height="46.14" fill="#0070c6"/><rect x="998.50" y="489.53" width="6.3" height="66.67" fill="#006b2f"/><rect x="998.50" y="505.60" width="6.3" height="50.60" fill="#0070c6"/><rect x="1007.38" y="488.14" width="6.3" height="68.06" fill="#006b2f"/><rect x="1007.38" y="503.68" width="6.3" height="52.52" fill="#0070c6"/><rect x="1016.25" y="488.14" width="6.3" height="68.06" fill="#006b2f"/><rect x="1016.25" y="503.68" width="6.3" height="52.52" fill="#0070c6"/><rect x="1025.12" y="494.37" width="6.3" height="61.83" fill="#006b2f"/><rect x="1025.12" y="508.83" width="6.3" height="47.37" fill="#0070c6"/><rect x="1033.99" y="485.61" width="6.3" height="70.59" fill="#006b2f"/><rect x="1033.99" y="502.45" width="6.3" height="53.75" fill="#0070c6"/><rect x="1042.87" y="486.45" width="6.3" height="69.75" fill="#006b2f"/><rect x="1042.87" y="503.06" width="6.3" height="53.14" fill="#0070c6"/><rect x="1051.74" y="501.52" width="6.3" height="54.68" fill="#006b2f"/><rect x="1051.74" y="515.14" width="6.3" height="41.06" fill="#0070c6"/><rect x="1060.61" y="488.84" width="6.3" height="67.36" fill="#006b2f"/><rect x="1060.61" y="505.60" width="6.3" height="50.60" fill="#0070c6"/><rect x="1069.48" y="483.99" width="6.3" height="72.21" fill="#006b2f"/><rect x="1069.48" y="501.75" width="6.3" height="54.45" fill="#0070c6"/><rect x="1078.36" y="498.45" width="6.3" height="57.75" fill="#006b2f"/><rect x="1078.36" y="513.37" width="6.3" height="42.83" fill="#0070c6"/><rect x="1087.23" y="496.06" width="6.3" height="60.14" fill="#006b2f"/><rect x="1087.23" y="511.37" width="6.3" height="44.83" fill="#0070c6"/><rect x="1096.10" y="494.37" width="6.3" height="61.83" fill="#006b2f"/><rect x="1096.10" y="509.44" width="6.3" height="46.76" fill="#0070c6"/><rect x="1104.97" y="501.06" width="6.3" height="55.14" fill="#006b2f"/><rect x="1104.97" y="514.60" width="6.3" height="41.60" fill="#0070c6"/><rect x="1113.85" y="486.45" width="6.3" height="69.75" fill="#006b2f"/><rect x="1113.85" y="503.68" width="6.3" height="52.52" fill="#0070c6"/><rect x="1122.72" y="483.99" width="6.3" height="72.21" fill="#006b2f"/><rect x="1122.72" y="501.75" width="6.3" height="54.45" fill="#0070c6"/><rect x="1131.59" y="481.45" width="6.3" height="74.75" fill="#006b2f"/><rect x="1131.59" y="499.14" width="6.3" height="57.06" fill="#0070c6"/><rect x="1140.46" y="481.45" width="6.3" height="74.75" fill="#006b2f"/><rect x="1140.46" y="499.76" width="6.3" height="56.44" fill="#0070c6"/><rect x="1149.34" y="497.60" width="6.3" height="58.60" fill="#006b2f"/><rect x="1149.34" y="511.98" width="6.3" height="44.22" fill="#0070c6"/><rect x="1158.21" y="498.45" width="6.3" height="57.75" fill="#006b2f"/><rect x="1158.21" y="512.60" width="6.3" height="43.60" fill="#0070c6"/><rect x="1167.08" y="490.37" width="6.3" height="65.83" fill="#006b2f"/><rect x="1167.08" y="506.22" width="6.3" height="49.99" fill="#0070c6"/><rect x="1175.96" y="481.45" width="6.3" height="74.75" fill="#006b2f"/><rect x="1175.96" y="499.76" width="6.3" height="56.44" fill="#0070c6"/><rect x="1184.83" y="501.06" width="6.3" height="55.14" fill="#006b2f"/><rect x="1184.83" y="514.60" width="6.3" height="41.60" fill="#0070c6"/><rect x="1193.70" y="480.91" width="6.3" height="75.29" fill="#006b2f"/><rect x="1193.70" y="498.53" width="6.3" height="57.68" fill="#0070c6"/><rect x="1202.57" y="492.99" width="6.3" height="63.21" fill="#006b2f"/><rect x="1202.57" y="508.21" width="6.3" height="47.99" fill="#0070c6"/><rect x="1211.45" y="494.37" width="6.3" height="61.83" fill="#006b2f"/><rect x="1211.45" y="509.44" width="6.3" height="46.76" fill="#0070c6"/><rect x="1220.32" y="483.99" width="6.3" height="72.21" fill="#006b2f"/><rect x="1220.32" y="500.45" width="6.3" height="55.75" fill="#0070c6"/><rect x="1229.19" y="473.53" width="6.3" height="82.67" fill="#006b2f"/><rect x="1229.19" y="493.37" width="6.3" height="62.83" fill="#0070c6"/><rect x="1238.06" y="484.91" width="6.3" height="71.29" fill="#006b2f"/><rect x="1238.06" y="501.75" width="6.3" height="54.45" fill="#0070c6"/><rect x="1246.94" y="489.53" width="6.3" height="66.67" fill="#006b2f"/><rect x="1246.94" y="505.60" width="6.3" height="50.60" fill="#0070c6"/><rect x="1255.81" y="493.45" width="6.3" height="62.75" fill="#006b2f"/><rect x="1255.81" y="509.44" width="6.3" height="46.76" fill="#0070c6"/><rect x="1264.68" y="492.07" width="6.3" height="64.13" fill="#006b2f"/><rect x="1264.68" y="506.83" width="6.3" height="49.37" fill="#0070c6"/><rect x="1273.55" y="489.53" width="6.3" height="66.67" fill="#006b2f"/><rect x="1273.55" y="505.60" width="6.3" height="50.60" fill="#0070c6"/><rect x="1282.42" y="466.30" width="6.3" height="89.90" fill="#006b2f"/><rect x="1282.42" y="487.61" width="6.3" height="68.59" fill="#0070c6"/><rect x="1291.30" y="492.99" width="6.3" height="63.21" fill="#006b2f"/><rect x="1291.30" y="508.21" width="6.3" height="47.99" fill="#0070c6"/><rect x="1300.17" y="484.91" width="6.3" height="71.29" fill="#006b2f"/><rect x="1300.17" y="502.45" width="6.3" height="53.75" fill="#0070c6"/><rect x="1309.04" y="480.07" width="6.3" height="76.13" fill="#006b2f"/><rect x="1309.04" y="498.53" width="6.3" height="57.68" fill="#0070c6"/><rect x="1317.91" y="494.37" width="6.3" height="61.83" fill="#006b2f"/><rect x="1317.91" y="509.44" width="6.3" height="46.76" fill="#0070c6"/><rect x="1326.79" y="482.30" width="6.3" height="73.90" fill="#006b2f"/><rect x="1326.79" y="500.45" width="6.3" height="55.75" fill="#0070c6"/><rect x="1335.66" y="492.07" width="6.3" height="64.13" fill="#006b2f"/><rect x="1335.66" y="506.83" width="6.3" height="49.37" fill="#0070c6"/><rect x="1344.53" y="493.45" width="6.3" height="62.75" fill="#006b2f"/><rect x="1344.53" y="508.83" width="6.3" height="47.37" fill="#0070c6"/><rect x="1353.40" y="484.91" width="6.3" height="71.29" fill="#006b2f"/><rect x="1353.40" y="501.75" width="6.3" height="54.45" fill="#0070c6"/><rect x="1362.28" y="477.53" width="6.3" height="78.67" fill="#006b2f"/><rect x="1362.28" y="496.60" width="6.3" height="59.60" fill="#0070c6"/><rect x="1371.15" y="489.53" width="6.3" height="66.67" fill="#006b2f"/><rect x="1371.15" y="506.22" width="6.3" height="49.99" fill="#0070c6"/><rect x="1380.02" y="481.45" width="6.3" height="74.75" fill="#006b2f"/><rect x="1380.02" y="499.14" width="6.3" height="57.06" fill="#0070c6"/><rect x="1388.89" y="490.37" width="6.3" height="65.83" fill="#006b2f"/><rect x="1388.89" y="506.22" width="6.3" height="49.99" fill="#0070c6"/><rect x="1397.77" y="476.61" width="6.3" height="79.59" fill="#006b2f"/><rect x="1397.77" y="495.37" width="6.3" height="60.83" fill="#0070c6"/><rect x="1406.64" y="484.91" width="6.3" height="71.29" fill="#006b2f"/><rect x="1406.64" y="502.45" width="6.3" height="53.75" fill="#0070c6"/><rect x="1415.51" y="480.91" width="6.3" height="75.29" fill="#006b2f"/><rect x="1415.51" y="499.14" width="6.3" height="57.06" fill="#0070c6"/><rect x="1424.38" y="486.45" width="6.3" height="69.75" fill="#006b2f"/><rect x="1424.38" y="503.68" width="6.3" height="52.52" fill="#0070c6"/><rect x="1433.26" y="488.14" width="6.3" height="68.06" fill="#006b2f"/><rect x="1433.26" y="504.91" width="6.3" height="51.29" fill="#0070c6"/><rect x="1442.13" y="493.45" width="6.3" height="62.75" fill="#006b2f"/><rect x="1442.13" y="508.83" width="6.3" height="47.37" fill="#0070c6"/><rect x="1451.00" y="490.37" width="6.3" height="65.83" fill="#006b2f"/><rect x="1451.00" y="506.22" width="6.3" height="49.99" fill="#0070c6"/><rect x="1459.88" y="489.53" width="6.3" height="66.67" fill="#006b2f"/><rect x="1459.88" y="505.60" width="6.3" height="50.60" fill="#0070c6"/><rect x="1468.75" y="496.06" width="6.3" height="60.14" fill="#006b2f"/><rect x="1468.75" y="510.06" width="6.3" height="46.14" fill="#0070c6"/><rect x="1477.62" y="480.91" width="6.3" height="75.29" fill="#006b2f"/><rect x="1477.62" y="498.53" width="6.3" height="57.68" fill="#0070c6"/><rect x="1486.49" y="485.61" width="6.3" height="70.59" fill="#006b2f"/><rect x="1486.49" y="502.45" width="6.3" height="53.75" fill="#0070c6"/><rect x="1495.37" y="485.61" width="6.3" height="70.59" fill="#006b2f"/><rect x="1495.37" y="502.45" width="6.3" height="53.75" fill="#0070c6"/><rect x="1504.24" y="490.37" width="6.3" height="65.83" fill="#006b2f"/><rect x="1504.24" y="506.22" width="6.3" height="49.99" fill="#0070c6"/><rect x="1513.11" y="481.45" width="6.3" height="74.75" fill="#006b2f"/><rect x="1513.11" y="499.76" width="6.3" height="56.44" fill="#0070c6"/><rect x="1521.98" y="494.37" width="6.3" height="61.83" fill="#006b2f"/><rect x="1521.98" y="510.06" width="6.3" height="46.14" fill="#0070c6"/><rect x="1530.86" y="488.14" width="6.3" height="68.06" fill="#006b2f"/><rect x="1530.86" y="504.91" width="6.3" height="51.29" fill="#0070c6"/><rect x="1539.73" y="484.91" width="6.3" height="71.29" fill="#006b2f"/><rect x="1539.73" y="501.75" width="6.3" height="54.45" fill="#0070c6"/><rect x="1548.60" y="478.38" width="6.3" height="77.82" fill="#006b2f"/><rect x="1548.60" y="496.60" width="6.3" height="59.60" fill="#0070c6"/><rect x="1557.47" y="485.61" width="6.3" height="70.59" fill="#006b2f"/><rect x="1557.47" y="502.45" width="6.3" height="53.75" fill="#0070c6"/><rect x="1566.35" y="492.99" width="6.3" height="63.21" fill="#006b2f"/><rect x="1566.35" y="508.21" width="6.3" height="47.99" fill="#0070c6"/><rect x="1575.22" y="494.37" width="6.3" height="61.83" fill="#006b2f"/><rect x="1575.22" y="508.83" width="6.3" height="47.37" fill="#0070c6"/><rect x="1584.09" y="476.38" width="6.3" height="79.82" fill="#006b2f"/><rect x="1584.09" y="495.22" width="6.3" height="60.98" fill="#0070c6"/><rect x="1592.96" y="494.68" width="6.3" height="61.52" fill="#006b2f"/><rect x="1592.96" y="509.21" width="6.3" height="46.99" fill="#0070c6"/><rect x="1601.84" y="490.60" width="6.3" height="65.60" fill="#006b2f"/><rect x="1601.84" y="506.22" width="6.3" height="49.99" fill="#0070c6"/><rect x="1610.71" y="493.07" width="6.3" height="63.13" fill="#006b2f"/><rect x="1610.71" y="508.06" width="6.3" height="48.14" fill="#0070c6"/><rect x="1619.58" y="554.20" width="7" height="2.00" fill="#0070c6"/><path d="M128.2 401.9 V556.2 H1626.4" fill="none" stroke="#b4b4b4" stroke-width="1"/><path d="M128.20 556.2 v5 M137.07 556.2 v5 M145.94 556.2 v5 M154.82 556.2 v5 M163.69 556.2 v5 M172.56 556.2 v5 M181.44 556.2 v5 M190.31 556.2 v5 M199.18 556.2 v5 M208.05 556.2 v5 M216.93 556.2 v5 M225.80 556.2 v5 M234.67 556.2 v5 M243.54 556.2 v5 M252.41 556.2 v5 M261.29 556.2 v5 M270.16 556.2 v5 M279.03 556.2 v5 M287.90 556.2 v5 M296.78 556.2 v5 M305.65 556.2 v5 M314.52 556.2 v5 M323.39 556.2 v5 M332.27 556.2 v5 M341.14 556.2 v5 M350.01 556.2 v5 M358.88 556.2 v5 M367.76 556.2 v5 M376.63 556.2 v5 M385.50 556.2 v5 M394.38 556.2 v5 M403.25 556.2 v5 M412.12 556.2 v5 M420.99 556.2 v5 M429.87 556.2 v5 M438.74 556.2 v5 M447.61 556.2 v5 M456.48 556.2 v5 M465.36 556.2 v5 M474.23 556.2 v5 M483.10 556.2 v5 M491.97 556.2 v5 M500.85 556.2 v5 M509.72 556.2 v5 M518.59 556.2 v5 M527.46 556.2 v5 M536.34 556.2 v5 M545.21 556.2 v5 M554.08 556.2 v5 M562.95 556.2 v5 M571.83 556.2 v5 M580.70 556.2 v5 M589.57 556.2 v5 M598.44 556.2 v5 M607.32 556.2 v5 M616.19 556.2 v5 M625.06 556.2 v5 M633.93 556.2 v5 M642.81 556.2 v5 M651.68 556.2 v5 M660.55 556.2 v5 M669.42 556.2 v5 M678.30 556.2 v5 M687.17 556.2 v5 M696.04 556.2 v5 M704.91 556.2 v5 M713.79 556.2 v5 M722.66 556.2 v5 M731.53 556.2 v5 M740.40 556.2 v5 M749.28 556.2 v5 M758.15 556.2 v5 M767.02 556.2 v5 M775.89 556.2 v5 M784.77 556.2 v5 M793.64 556.2 v5 M802.51 556.2 v5 M811.38 556.2 v5 M820.26 556.2 v5 M829.13 556.2 v5 M838.00 556.2 v5 M846.87 556.2 v5 M855.75 556.2 v5 M864.62 556.2 v5 M873.49 556.2 v5 M882.36 556.2 v5 M891.24 556.2 v5 M900.11 556.2 v5 M908.98 556.2 v5 M917.85 556.2 v5 M926.73 556.2 v5 M935.60 556.2 v5 M944.47 556.2 v5 M953.34 556.2 v5 M962.22 556.2 v5 M971.09 556.2 v5 M979.96 556.2 v5 M988.83 556.2 v5 M997.70 556.2 v5 M1006.58 556.2 v5 M1015.45 556.2 v5 M1024.32 556.2 v5 M1033.19 556.2 v5 M1042.07 556.2 v5 M1050.94 556.2 v5 M1059.81 556.2 v5 M1068.68 556.2 v5 M1077.56 556.2 v5 M1086.43 556.2 v5 M1095.30 556.2 v5 M1104.17 556.2 v5 M1113.05 556.2 v5 M1121.92 556.2 v5 M1130.79 556.2 v5 M1139.66 556.2 v5 M1148.54 556.2 v5 M1157.41 556.2 v5 M1166.28 556.2 v5 M1175.16 556.2 v5 M1184.03 556.2 v5 M1192.90 556.2 v5 M1201.77 556.2 v5 M1210.65 556.2 v5 M1219.52 556.2 v5 M1228.39 556.2 v5 M1237.26 556.2 v5 M1246.14 556.2 v5 M1255.01 556.2 v5 M1263.88 556.2 v5 M1272.75 556.2 v5 M1281.62 556.2 v5 M1290.50 556.2 v5 M1299.37 556.2 v5 M1308.24 556.2 v5 M1317.12 556.2 v5 M1325.99 556.2 v5 M1334.86 556.2 v5 M1343.73 556.2 v5 M1352.61 556.2 v5 M1361.48 556.2 v5 M1370.35 556.2 v5 M1379.22 556.2 v5 M1388.10 556.2 v5 M1396.97 556.2 v5 M1405.84 556.2 v5 M1414.71 556.2 v5 M1423.59 556.2 v5 M1432.46 556.2 v5 M1441.33 556.2 v5 M1450.20 556.2 v5 M1459.08 556.2 v5 M1467.95 556.2 v5 M1476.82 556.2 v5 M1485.69 556.2 v5 M1494.57 556.2 v5 M1503.44 556.2 v5 M1512.31 556.2 v5 M1521.18 556.2 v5 M1530.06 556.2 v5 M1538.93 556.2 v5 M1547.80 556.2 v5 M1556.67 556.2 v5 M1565.55 556.2 v5 M1574.42 556.2 v5 M1583.29 556.2 v5 M1592.16 556.2 v5 M1601.04 556.2 v5 M1609.91 556.2 v5 M1618.78 556.2 v5 M1627.65 556.2 v5 " stroke="#c4c4c4" stroke-width="1"/><path d="M122.19999999999999 556.20 H128.2" stroke="#b4b4b4" stroke-width="1"/><text x="118.19999999999999" y="562.00" text-anchor="end" font-family="Liberation Sans" font-size="14" fill="#333">0</text><path d="M122.19999999999999 517.75 H128.2" stroke="#b4b4b4" stroke-width="1"/><text x="118.19999999999999" y="523.55" text-anchor="end" font-family="Liberation Sans" font-size="14" fill="#333">0,5</text><path d="M122.19999999999999 479.30 H128.2" stroke="#b4b4b4" stroke-width="1"/><text x="118.19999999999999" y="485.10" text-anchor="end" font-family="Liberation Sans" font-size="14" fill="#333">1</text><path d="M122.19999999999999 440.85 H128.2" stroke="#b4b4b4" stroke-width="1"/><text x="118.19999999999999" y="446.65" text-anchor="end" font-family="Liberation Sans" font-size="14" fill="#333">1,5</text><path d="M122.19999999999999 402.40 H128.2" stroke="#b4b4b4" stroke-width="1"/><text x="118.19999999999999" y="408.20" text-anchor="end" font-family="Liberation Sans" font-size="14" fill="#333">2</text><path d="M128.2 402.40 H1626.4" stroke="#f26262" stroke-width="1.2"/><text transform="translate(92,479.3) rotate(-90)" text-anchor="middle" font-family="Liberation Sans" font-size="14" fill="#333">kWh</text><text x="132.6" y="580.8" text-anchor="middle" font-family="Liberation Sans" font-size="14" fill="#333">2024-09-02 01:00</text><text x="265.7" y="580.8" text-anchor="middle" font-family="Liberation Sans" font-size="14" fill="#333">2024-09-02 16:00</text><text x="398.8" y="580.8" text-anchor="middle" font-family="Liberation Sans" font-size="14" fill="#333">2024-09-03 07:00</text><text x="531.9" y="580.8" text-anchor="middle" font-family="Liberation Sans" font-size="14" fill="#333">2024-09-03 22:00</text><text x="665.0" y="580.8" text-anchor="middle" font-family="Liberation Sans" font-size="14" fill="#333">2024-09-04 13:00</text><text x="798.1" y="580.8" text-anchor="middle" font-family="Liberation Sans" font-size="14" fill="#333">2024-09-05 04:00</text><text x="931.2" y="580.8" text-anchor="middle" font-family="Liberation Sans" font-size="14" fill="#333">2024-09-05 19:00</text><text x="1064.2" y="580.8" text-anchor="middle" font-family="Liberation Sans" font-size="14" fill="#333">2024-09-06 10:00</text><text x="1197.3" y="580.8" text-anchor="middle" font-family="Liberation Sans" font-size="14" fill="#333">2024-09-07 01:00</text><text x="1330.4" y="580.8" text-anchor="middle" font-family="Liberation Sans" font-size="14" fill="#333">2024-09-07 16:00</text><text x="1463.5" y="580.8" text-anchor="middle" font-family="Liberation Sans" font-size="14" fill="#333">2024-09-08 07:00</text><text x="1596.6" y="580.8" text-anchor="middle" font-family="Liberation Sans" font-size="14" fill="#333">2024-09-08 22:00</text><path d="M1426 378.5 H1436" stroke="#f03030" stroke-width="1.5"/><text x="1440" y="383" font-family="Liberation Sans" font-size="14" fill="#444">Threshold</text><rect x="1521" y="372" width="10" height="10" fill="#0070c6"/><text x="1535" y="383" font-family="Liberation Sans" font-size="14" fill="#444">Maskin 1</text><rect x="1595" y="372" width="10" height="10" fill="#006b2f"/><text x="1608" y="383" font-family="Liberation Sans" font-size="14" fill="#444">Maskin 2</text></svg><svg class="a" style="left:0;top:0" width="1915" height="1020" viewBox="0 0 1915 1020"><rect x="129.00" y="743.59" width="6.3" height="93.11" fill="#0070c6"/><rect x="137.87" y="738.72" width="6.3" height="97.98" fill="#0070c6"/><rect x="146.75" y="739.48" width="6.3" height="97.22" fill="#0070c6"/><rect x="155.62" y="751.32" width="6.3" height="85.38" fill="#0070c6"/><rect x="164.49" y="747.41" width="6.3" height="89.29" fill="#0070c6"/><rect x="173.36" y="741.49" width="6.3" height="95.21" fill="#0070c6"/><rect x="182.24" y="734.80" width="6.3" height="101.90" fill="#0070c6"/><rect x="191.11" y="746.55" width="6.3" height="90.15" fill="#0070c6"/><rect x="199.98" y="753.71" width="6.3" height="82.99" fill="#0070c6"/><rect x="208.85" y="743.59" width="6.3" height="93.11" fill="#0070c6"/><rect x="217.73" y="738.72" width="6.3" height="97.98" fill="#0070c6"/><rect x="226.60" y="734.80" width="6.3" height="101.90" fill="#0070c6"/><rect x="235.47" y="746.55" width="6.3" height="90.15" fill="#0070c6"/><rect x="244.34" y="735.57" width="6.3" height="101.13" fill="#0070c6"/><rect x="253.22" y="747.41" width="6.3" height="89.29" fill="#0070c6"/><rect x="262.09" y="743.59" width="6.3" height="93.11" fill="#0070c6"/><rect x="270.96" y="745.69" width="6.3" height="91.01" fill="#0070c6"/><rect x="279.83" y="737.95" width="6.3" height="98.75" fill="#0070c6"/><rect x="288.70" y="738.72" width="6.3" height="97.98" fill="#0070c6"/><rect x="297.58" y="753.71" width="6.3" height="82.99" fill="#0070c6"/><rect x="306.45" y="757.15" width="6.3" height="79.55" fill="#0070c6"/><rect x="315.32" y="769.95" width="6.3" height="66.75" fill="#0070c6"/><rect x="324.19" y="755.52" width="6.3" height="81.18" fill="#0070c6"/><rect x="333.07" y="755.52" width="6.3" height="81.18" fill="#0070c6"/><rect x="341.94" y="754.67" width="6.3" height="82.03" fill="#0070c6"/><rect x="350.81" y="769.95" width="6.3" height="66.75" fill="#0070c6"/><rect x="359.69" y="763.36" width="6.3" height="73.34" fill="#0070c6"/><rect x="368.56" y="741.49" width="6.3" height="95.21" fill="#0070c6"/><rect x="377.43" y="758.68" width="6.3" height="78.02" fill="#0070c6"/><rect x="386.30" y="754.67" width="6.3" height="82.03" fill="#0070c6"/><rect x="395.18" y="751.32" width="6.3" height="85.38" fill="#0070c6"/><rect x="404.05" y="757.91" width="6.3" height="78.79" fill="#0070c6"/><rect x="412.92" y="758.68" width="6.3" height="78.02" fill="#0070c6"/><rect x="421.79" y="753.23" width="6.3" height="83.47" fill="#0070c6"/><rect x="430.67" y="755.52" width="6.3" height="81.18" fill="#0070c6"/><rect x="439.54" y="755.52" width="6.3" height="81.18" fill="#0070c6"/><rect x="448.41" y="757.91" width="6.3" height="78.79" fill="#0070c6"/><rect x="457.28" y="754.76" width="6.3" height="81.94" fill="#0070c6"/><rect x="466.16" y="719.71" width="6.3" height="116.99" fill="#0070c6"/><rect x="475.03" y="730.89" width="6.3" height="105.81" fill="#0070c6"/><rect x="483.90" y="714.17" width="6.3" height="122.53" fill="#0070c6"/><rect x="492.77" y="727.73" width="6.3" height="108.97" fill="#0070c6"/><rect x="501.65" y="790.38" width="6.3" height="46.32" fill="#0070c6"/><rect x="510.52" y="783.51" width="6.3" height="53.19" fill="#0070c6"/><rect x="519.39" y="783.51" width="6.3" height="53.19" fill="#0070c6"/><rect x="528.26" y="781.02" width="6.3" height="55.68" fill="#0070c6"/><rect x="537.13" y="787.42" width="6.3" height="49.28" fill="#0070c6"/><rect x="546.01" y="779.40" width="6.3" height="57.30" fill="#0070c6"/><rect x="554.88" y="778.64" width="6.3" height="58.06" fill="#0070c6"/><rect x="563.75" y="789.71" width="6.3" height="46.99" fill="#0070c6"/><rect x="572.62" y="785.70" width="6.3" height="51.00" fill="#0070c6"/><rect x="581.50" y="787.42" width="6.3" height="49.28" fill="#0070c6"/><rect x="590.37" y="773.86" width="6.3" height="62.84" fill="#0070c6"/><rect x="599.24" y="785.03" width="6.3" height="51.67" fill="#0070c6"/><rect x="608.12" y="790.38" width="6.3" height="46.32" fill="#0070c6"/><rect x="616.99" y="755.52" width="6.3" height="81.18" fill="#0070c6"/><rect x="625.86" y="729.36" width="6.3" height="107.34" fill="#0070c6"/><rect x="634.73" y="737.28" width="6.3" height="99.42" fill="#0070c6"/><rect x="643.61" y="735.76" width="6.3" height="100.94" fill="#0070c6"/><rect x="652.48" y="739.67" width="6.3" height="97.03" fill="#0070c6"/><rect x="661.35" y="726.21" width="6.3" height="110.49" fill="#0070c6"/><rect x="670.22" y="706.92" width="6.3" height="129.78" fill="#0070c6"/><rect x="679.10" y="727.73" width="6.3" height="108.97" fill="#0070c6"/><rect x="687.97" y="757.91" width="6.3" height="78.79" fill="#0070c6"/><rect x="696.84" y="766.60" width="6.3" height="70.10" fill="#0070c6"/><rect x="705.71" y="765.08" width="6.3" height="71.63" fill="#0070c6"/><rect x="714.59" y="765.84" width="6.3" height="70.86" fill="#0070c6"/><rect x="723.46" y="758.68" width="6.3" height="78.02" fill="#0070c6"/><rect x="732.33" y="771.47" width="6.3" height="65.23" fill="#0070c6"/><rect x="741.20" y="765.84" width="6.3" height="70.86" fill="#0070c6"/><rect x="750.08" y="769.95" width="6.3" height="66.75" fill="#0070c6"/><rect x="758.95" y="775.39" width="6.3" height="61.31" fill="#0070c6"/><rect x="767.82" y="777.11" width="6.3" height="59.59" fill="#0070c6"/><rect x="776.69" y="758.68" width="6.3" height="78.02" fill="#0070c6"/><rect x="785.57" y="771.47" width="6.3" height="65.23" fill="#0070c6"/><rect x="794.44" y="769.95" width="6.3" height="66.75" fill="#0070c6"/><rect x="803.31" y="774.62" width="6.3" height="62.08" fill="#0070c6"/><rect x="812.18" y="769.09" width="6.3" height="67.61" fill="#0070c6"/><rect x="821.06" y="769.09" width="6.3" height="67.61" fill="#0070c6"/><rect x="829.93" y="761.92" width="6.3" height="74.78" fill="#0070c6"/><rect x="838.80" y="765.08" width="6.3" height="71.63" fill="#0070c6"/><rect x="847.67" y="766.60" width="6.3" height="70.10" fill="#0070c6"/><rect x="856.55" y="757.15" width="6.3" height="79.55" fill="#0070c6"/><rect x="865.42" y="757.91" width="6.3" height="78.79" fill="#0070c6"/><rect x="874.29" y="761.16" width="6.3" height="75.54" fill="#0070c6"/><rect x="883.16" y="750.75" width="6.3" height="85.95" fill="#0070c6"/><rect x="892.04" y="771.47" width="6.3" height="65.23" fill="#0070c6"/><rect x="900.91" y="751.51" width="6.3" height="85.19" fill="#0070c6"/><rect x="909.78" y="753.23" width="6.3" height="83.47" fill="#0070c6"/><rect x="918.65" y="745.12" width="6.3" height="91.58" fill="#0070c6"/><rect x="927.53" y="761.92" width="6.3" height="74.78" fill="#0070c6"/><rect x="936.40" y="747.60" width="6.3" height="89.10" fill="#0070c6"/><rect x="945.27" y="758.68" width="6.3" height="78.02" fill="#0070c6"/><rect x="954.14" y="770.71" width="6.3" height="65.99" fill="#0070c6"/><rect x="963.02" y="773.86" width="6.3" height="62.84" fill="#0070c6"/><rect x="971.89" y="785.51" width="6.3" height="51.19" fill="#0070c6"/><rect x="980.76" y="766.60" width="6.3" height="70.10" fill="#0070c6"/><rect x="989.63" y="779.40" width="6.3" height="57.30" fill="#0070c6"/><rect x="998.50" y="773.86" width="6.3" height="62.84" fill="#0070c6"/><rect x="1007.38" y="771.47" width="6.3" height="65.23" fill="#0070c6"/><rect x="1016.25" y="771.47" width="6.3" height="65.23" fill="#0070c6"/><rect x="1025.12" y="777.87" width="6.3" height="58.83" fill="#0070c6"/><rect x="1033.99" y="769.95" width="6.3" height="66.75" fill="#0070c6"/><rect x="1042.87" y="770.71" width="6.3" height="65.99" fill="#0070c6"/><rect x="1051.74" y="785.70" width="6.3" height="51.00" fill="#0070c6"/><rect x="1060.61" y="773.86" width="6.3" height="62.84" fill="#0070c6"/><rect x="1069.48" y="769.09" width="6.3" height="67.61" fill="#0070c6"/><rect x="1078.36" y="783.51" width="6.3" height="53.19" fill="#0070c6"/><rect x="1087.23" y="781.02" width="6.3" height="55.68" fill="#0070c6"/><rect x="1096.10" y="778.64" width="6.3" height="58.06" fill="#0070c6"/><rect x="1104.97" y="785.03" width="6.3" height="51.67" fill="#0070c6"/><rect x="1113.85" y="771.47" width="6.3" height="65.23" fill="#0070c6"/><rect x="1122.72" y="769.09" width="6.3" height="67.61" fill="#0070c6"/><rect x="1131.59" y="765.84" width="6.3" height="70.86" fill="#0070c6"/><rect x="1140.46" y="766.60" width="6.3" height="70.10" fill="#0070c6"/><rect x="1149.34" y="781.79" width="6.3" height="54.91" fill="#0070c6"/><rect x="1158.21" y="782.55" width="6.3" height="54.15" fill="#0070c6"/><rect x="1167.08" y="774.62" width="6.3" height="62.08" fill="#0070c6"/><rect x="1175.96" y="766.60" width="6.3" height="70.10" fill="#0070c6"/><rect x="1184.83" y="785.03" width="6.3" height="51.67" fill="#0070c6"/><rect x="1193.70" y="765.08" width="6.3" height="71.63" fill="#0070c6"/><rect x="1202.57" y="777.11" width="6.3" height="59.59" fill="#0070c6"/><rect x="1211.45" y="778.64" width="6.3" height="58.06" fill="#0070c6"/><rect x="1220.32" y="767.46" width="6.3" height="69.24" fill="#0070c6"/><rect x="1229.19" y="758.68" width="6.3" height="78.02" fill="#0070c6"/><rect x="1238.06" y="769.09" width="6.3" height="67.61" fill="#0070c6"/><rect x="1246.94" y="773.86" width="6.3" height="62.84" fill="#0070c6"/><rect x="1255.81" y="778.64" width="6.3" height="58.06" fill="#0070c6"/><rect x="1264.68" y="775.39" width="6.3" height="61.31" fill="#0070c6"/><rect x="1273.55" y="773.86" width="6.3" height="62.84" fill="#0070c6"/><rect x="1282.42" y="751.51" width="6.3" height="85.19" fill="#0070c6"/><rect x="1291.30" y="777.11" width="6.3" height="59.59" fill="#0070c6"/><rect x="1300.17" y="769.95" width="6.3" height="66.75" fill="#0070c6"/><rect x="1309.04" y="765.08" width="6.3" height="71.63" fill="#0070c6"/><rect x="1317.91" y="778.64" width="6.3" height="58.06" fill="#0070c6"/><rect x="1326.79" y="767.46" width="6.3" height="69.24" fill="#0070c6"/><rect x="1335.66" y="775.39" width="6.3" height="61.31" fill="#0070c6"/><rect x="1344.53" y="777.87" width="6.3" height="58.83" fill="#0070c6"/><rect x="1353.40" y="769.09" width="6.3" height="67.61" fill="#0070c6"/><rect x="1362.28" y="762.69" width="6.3" height="74.01" fill="#0070c6"/><rect x="1371.15" y="774.62" width="6.3" height="62.08" fill="#0070c6"/><rect x="1380.02" y="765.84" width="6.3" height="70.86" fill="#0070c6"/><rect x="1388.89" y="774.62" width="6.3" height="62.08" fill="#0070c6"/><rect x="1397.77" y="761.16" width="6.3" height="75.54" fill="#0070c6"/><rect x="1406.64" y="769.95" width="6.3" height="66.75" fill="#0070c6"/><rect x="1415.51" y="765.84" width="6.3" height="70.86" fill="#0070c6"/><rect x="1424.38" y="771.47" width="6.3" height="65.23" fill="#0070c6"/><rect x="1433.26" y="773.00" width="6.3" height="63.70" fill="#0070c6"/><rect x="1442.13" y="777.87" width="6.3" height="58.83" fill="#0070c6"/><rect x="1451.00" y="774.62" width="6.3" height="62.08" fill="#0070c6"/><rect x="1459.88" y="773.86" width="6.3" height="62.84" fill="#0070c6"/><rect x="1468.75" y="779.40" width="6.3" height="57.30" fill="#0070c6"/><rect x="1477.62" y="765.08" width="6.3" height="71.63" fill="#0070c6"/><rect x="1486.49" y="769.95" width="6.3" height="66.75" fill="#0070c6"/><rect x="1495.37" y="769.95" width="6.3" height="66.75" fill="#0070c6"/><rect x="1504.24" y="774.62" width="6.3" height="62.08" fill="#0070c6"/><rect x="1513.11" y="766.60" width="6.3" height="70.10" fill="#0070c6"/><rect x="1521.98" y="779.40" width="6.3" height="57.30" fill="#0070c6"/><rect x="1530.86" y="773.00" width="6.3" height="63.70" fill="#0070c6"/><rect x="1539.73" y="769.09" width="6.3" height="67.61" fill="#0070c6"/><rect x="1548.60" y="762.69" width="6.3" height="74.01" fill="#0070c6"/><rect x="1557.47" y="769.95" width="6.3" height="66.75" fill="#0070c6"/><rect x="1566.35" y="777.11" width="6.3" height="59.59" fill="#0070c6"/><rect x="1575.22" y="777.87" width="6.3" height="58.83" fill="#0070c6"/><rect x="1584.09" y="760.97" width="6.3" height="75.73" fill="#0070c6"/><rect x="1592.96" y="778.35" width="6.3" height="58.35" fill="#0070c6"/><rect x="1601.84" y="774.62" width="6.3" height="62.08" fill="#0070c6"/><rect x="1610.71" y="776.92" width="6.3" height="59.78" fill="#0070c6"/><rect x="1619.58" y="834.70" width="7" height="2.00" fill="#0070c6"/><path d="M128.2 683.4 V836.7 H1626.4" fill="none" stroke="#b4b4b4" stroke-width="1"/><path d="M128.20 836.7 v5 M137.07 836.7 v5 M145.94 836.7 v5 M154.82 836.7 v5 M163.69 836.7 v5 M172.56 836.7 v5 M181.44 836.7 v5 M190.31 836.7 v5 M199.18 836.7 v5 M208.05 836.7 v5 M216.93 836.7 v5 M225.80 836.7 v5 M234.67 836.7 v5 M243.54 836.7 v5 M252.41 836.7 v5 M261.29 836.7 v5 M270.16 836.7 v5 M279.03 836.7 v5 M287.90 836.7 v5 M296.78 836.7 v5 M305.65 836.7 v5 M314.52 836.7 v5 M323.39 836.7 v5 M332.27 836.7 v5 M341.14 836.7 v5 M350.01 836.7 v5 M358.88 836.7 v5 M367.76 836.7 v5 M376.63 836.7 v5 M385.50 836.7 v5 M394.38 836.7 v5 M403.25 836.7 v5 M412.12 836.7 v5 M420.99 836.7 v5 M429.87 836.7 v5 M438.74 836.7 v5 M447.61 836.7 v5 M456.48 836.7 v5 M465.36 836.7 v5 M474.23 836.7 v5 M483.10 836.7 v5 M491.97 836.7 v5 M500.85 836.7 v5 M509.72 836.7 v5 M518.59 836.7 v5 M527.46 836.7 v5 M536.34 836.7 v5 M545.21 836.7 v5 M554.08 836.7 v5 M562.95 836.7 v5 M571.83 836.7 v5 M580.70 836.7 v5 M589.57 836.7 v5 M598.44 836.7 v5 M607.32 836.7 v5 M616.19 836.7 v5 M625.06 836.7 v5 M633.93 836.7 v5 M642.81 836.7 v5 M651.68 836.7 v5 M660.55 836.7 v5 M669.42 836.7 v5 M678.30 836.7 v5 M687.17 836.7 v5 M696.04 836.7 v5 M704.91 836.7 v5 M713.79 836.7 v5 M722.66 836.7 v5 M731.53 836.7 v5 M740.40 836.7 v5 M749.28 836.7 v5 M758.15 836.7 v5 M767.02 836.7 v5 M775.89 836.7 v5 M784.77 836.7 v5 M793.64 836.7 v5 M802.51 836.7 v5 M811.38 836.7 v5 M820.26 836.7 v5 M829.13 836.7 v5 M838.00 836.7 v5 M846.87 836.7 v5 M855.75 836.7 v5 M864.62 836.7 v5 M873.49 836.7 v5 M882.36 836.7 v5 M891.24 836.7 v5 M900.11 836.7 v5 M908.98 836.7 v5 M917.85 836.7 v5 M926.73 836.7 v5 M935.60 836.7 v5 M944.47 836.7 v5 M953.34 836.7 v5 M962.22 836.7 v5 M971.09 836.7 v5 M979.96 836.7 v5 M988.83 836.7 v5 M997.70 836.7 v5 M1006.58 836.7 v5 M1015.45 836.7 v5 M1024.32 836.7 v5 M1033.19 836.7 v5 M1042.07 836.7 v5 M1050.94 836.7 v5 M1059.81 836.7 v5 M1068.68 836.7 v5 M1077.56 836.7 v5 M1086.43 836.7 v5 M1095.30 836.7 v5 M1104.17 836.7 v5 M1113.05 836.7 v5 M1121.92 836.7 v5 M1130.79 836.7 v5 M1139.66 836.7 v5 M1148.54 836.7 v5 M1157.41 836.7 v5 M1166.28 836.7 v5 M1175.16 836.7 v5 M1184.03 836.7 v5 M1192.90 836.7 v5 M1201.77 836.7 v5 M1210.65 836.7 v5 M1219.52 836.7 v5 M1228.39 836.7 v5 M1237.26 836.7 v5 M1246.14 836.7 v5 M1255.01 836.7 v5 M1263.88 836.7 v5 M1272.75 836.7 v5 M1281.62 836.7 v5 M1290.50 836.7 v5 M1299.37 836.7 v5 M1308.24 836.7 v5 M1317.12 836.7 v5 M1325.99 836.7 v5 M1334.86 836.7 v5 M1343.73 836.7 v5 M1352.61 836.7 v5 M1361.48 836.7 v5 M1370.35 836.7 v5 M1379.22 836.7 v5 M1388.10 836.7 v5 M1396.97 836.7 v5 M1405.84 836.7 v5 M1414.71 836.7 v5 M1423.59 836.7 v5 M1432.46 836.7 v5 M1441.33 836.7 v5 M1450.20 836.7 v5 M1459.08 836.7 v5 M1467.95 836.7 v5 M1476.82 836.7 v5 M1485.69 836.7 v5 M1494.57 836.7 v5 M1503.44 836.7 v5 M1512.31 836.7 v5 M1521.18 836.7 v5 M1530.06 836.7 v5 M1538.93 836.7 v5 M1547.80 836.7 v5 M1556.67 836.7 v5 M1565.55 836.7 v5 M1574.42 836.7 v5 M1583.29 836.7 v5 M1592.16 836.7 v5 M1601.04 836.7 v5 M1609.91 836.7 v5 M1618.78 836.7 v5 M1627.65 836.7 v5 " stroke="#c4c4c4" stroke-width="1"/><path d="M122.19999999999999 836.70 H128.2" stroke="#b4b4b4" stroke-width="1"/><text x="118.19999999999999" y="842.50" text-anchor="end" font-family="Liberation Sans" font-size="14" fill="#333">0</text><path d="M122.19999999999999 817.60 H128.2" stroke="#b4b4b4" stroke-width="1"/><text x="118.19999999999999" y="823.40" text-anchor="end" font-family="Liberation Sans" font-size="14" fill="#333">0,2</text><path d="M122.19999999999999 798.50 H128.2" stroke="#b4b4b4" stroke-width="1"/><text x="118.19999999999999" y="804.30" text-anchor="end" font-family="Liberation Sans" font-size="14" fill="#333">0,4</text><path d="M122.19999999999999 779.40 H128.2" stroke="#b4b4b4" stroke-width="1"/><text x="118.19999999999999" y="785.20" text-anchor="end" font-family="Liberation Sans" font-size="14" fill="#333">0,6</text><path d="M122.19999999999999 760.30 H128.2" stroke="#b4b4b4" stroke-width="1"/><text x="118.19999999999999" y="766.10" text-anchor="end" font-family="Liberation Sans" font-size="14" fill="#333">0,8</text><path d="M122.19999999999999 741.20 H128.2" stroke="#b4b4b4" stroke-width="1"/><text x="118.19999999999999" y="747.00" text-anchor="end" font-family="Liberation Sans" font-size="14" fill="#333">1</text><path d="M122.19999999999999 722.10 H128.2" stroke="#b4b4b4" stroke-width="1"/><text x="118.19999999999999" y="727.90" text-anchor="end" font-family="Liberation Sans" font-size="14" fill="#333">1,2</text><path d="M122.19999999999999 703.00 H128.2" stroke="#b4b4b4" stroke-width="1"/><text x="118.19999999999999" y="708.80" text-anchor="end" font-family="Liberation Sans" font-size="14" fill="#333">1,4</text><path d="M122.19999999999999 683.90 H128.2" stroke="#b4b4b4" stroke-width="1"/><text x="118.19999999999999" y="689.70" text-anchor="end" font-family="Liberation Sans" font-size="14" fill="#333">1,6</text><path d="M128.2 741.20 H1626.4" stroke="#f26262" stroke-width="1.2"/><text transform="translate(92,760.3) rotate(-90)" text-anchor="middle" font-family="Liberation Sans" font-size="14" fill="#333">kWh</text><text x="132.6" y="861.3" text-anchor="middle" font-family="Liberation Sans" font-size="14" fill="#333">2024-09-02 01:00</text><text x="265.7" y="861.3" text-anchor="middle" font-family="Liberation Sans" font-size="14" fill="#333">2024-09-02 16:00</text><text x="398.8" y="861.3" text-anchor="middle" font-family="Liberation Sans" font-size="14" fill="#333">2024-09-03 07:00</text><text x="531.9" y="861.3" text-anchor="middle" font-family="Liberation Sans" font-size="14" fill="#333">2024-09-03 22:00</text><text x="665.0" y="861.3" text-anchor="middle" font-family="Liberation Sans" font-size="14" fill="#333">2024-09-04 13:00</text><text x="798.1" y="861.3" text-anchor="middle" font-family="Liberation Sans" font-size="14" fill="#333">2024-09-05 04:00</text><text x="931.2" y="861.3" text-anchor="middle" font-family="Liberation Sans" font-size="14" fill="#333">2024-09-05 19:00</text><text x="1064.2" y="861.3" text-anchor="middle" font-family="Liberation Sans" font-size="14" fill="#333">2024-09-06 10:00</text><text x="1197.3" y="861.3" text-anchor="middle" font-family="Liberation Sans" font-size="14" fill="#333">2024-09-07 01:00</text><text x="1330.4" y="861.3" text-anchor="middle" font-family="Liberation Sans" font-size="14" fill="#333">2024-09-07 16:00</text><text x="1463.5" y="861.3" text-anchor="middle" font-family="Liberation Sans" font-size="14" fill="#333">2024-09-08 07:00</text><text x="1596.6" y="861.3" text-anchor="middle" font-family="Liberation Sans" font-size="14" fill="#333">2024-09-08 22:00</text><path d="M1500 659.5 H1510" stroke="#f03030" stroke-width="1.5"/><text x="1514" y="664" font-family="Liberation Sans" font-size="14" fill="#444">Threshold</text><rect x="1595" y="653" width="10" height="10" fill="#0070c6"/><text x="1608" y="664" font-family="Liberation Sans" font-size="14" fill="#444">Maskin 1</text></svg><div class="a" style="left:114px;top:870px;width:1540px;height:76px;background:#f9f9f9;box-shadow:0 1px 2px rgba(0,0,0,0.15)"></div><div class="a" style="left:114px;top:874px;width:220px;height:72px;background:#f9f9f9"></div><div class="a" style="left:115px;top:870px;width:218px;height:4px;background:#e2e2e2"></div><div class="t" style="left:114px;top:881px;width:220px;text-align:center;font-size:13.7px;color:#555">måndag, september 2, 2024</div><div class="a" style="left:334px;top:874px;width:220px;height:72px;background:#f2f2f2"></div><div class="a" style="left:335px;top:870px;width:218px;height:4px;background:#e2e2e2"></div><div class="t" style="left:334px;top:881px;width:220px;text-align:center;font-size:13.7px;color:#555">tisdag, september 3, 2024</div><div class="a" style="left:554px;top:874px;width:220px;height:72px;background:#f9f9f9"></div><div class="a" style="left:555px;top:870px;width:218px;height:4px;background:#e2e2e2"></div><div class="t" style="left:554px;top:881px;width:220px;text-align:center;font-size:13.7px;color:#555">onsdag, september 4, 2024</div><div class="a" style="left:774px;top:874px;width:220px;height:72px;background:#f2f2f2"></div><div class="a" style="left:775px;top:870px;width:218px;height:4px;background:#e2e2e2"></div><div class="t" style="left:774px;top:881px;width:220px;text-align:center;font-size:13.7px;color:#555">torsdag, september 5, 2024</div><div class="a" style="left:994px;top:874px;width:220px;height:72px;background:#f9f9f9"></div><div class="a" style="left:995px;top:870px;width:218px;height:4px;background:#e2e2e2"></div><div class="t" style="left:994px;top:881px;width:220px;text-align:center;font-size:13.7px;color:#555">fredag, september 6, 2024</div><div class="a" style="left:1214px;top:874px;width:220px;height:72px;background:#f2f2f2"></div><div class="a" style="left:1215px;top:870px;width:218px;height:4px;background:#e2e2e2"></div><div class="t" style="left:1214px;top:881px;width:220px;text-align:center;font-size:13.7px;color:#555">lördag, september 7, 2024</div><div class="a" style="left:1434px;top:874px;width:220px;height:72px;background:#f9f9f9"></div><div class="a" style="left:1435px;top:870px;width:218px;height:4px;background:#e2e2e2"></div><div class="t" style="left:1434px;top:881px;width:220px;text-align:center;font-size:13.7px;color:#555">söndag, september 8, 2024</div><div class="a" style="left:114px;top:914px;width:44px;height:24px;background:#008000"></div><div class="a" style="left:159px;top:914px;width:175px;height:24px;background:#d32329"></div><div class="a" style="left:334px;top:914px;width:220px;height:24px;background:#a9a9a9"></div><div class="a" style="left:554px;top:914px;width:89px;height:24px;background:#d32329"></div><div class="a" style="left:643px;top:914px;width:351px;height:24px;background:#008000"></div><div class="a" style="left:995px;top:914px;width:86px;height:24px;background:#008000"></div><div class="a" style="left:1081px;top:914px;width:133px;height:24px;background:#d32329"></div><div class="a" style="left:1215px;top:914px;width:219px;height:24px;background:#d32329"></div><div class="a" style="left:1434px;top:914px;width:220px;height:24px;background:#a9a9a9"></div></body></html>
